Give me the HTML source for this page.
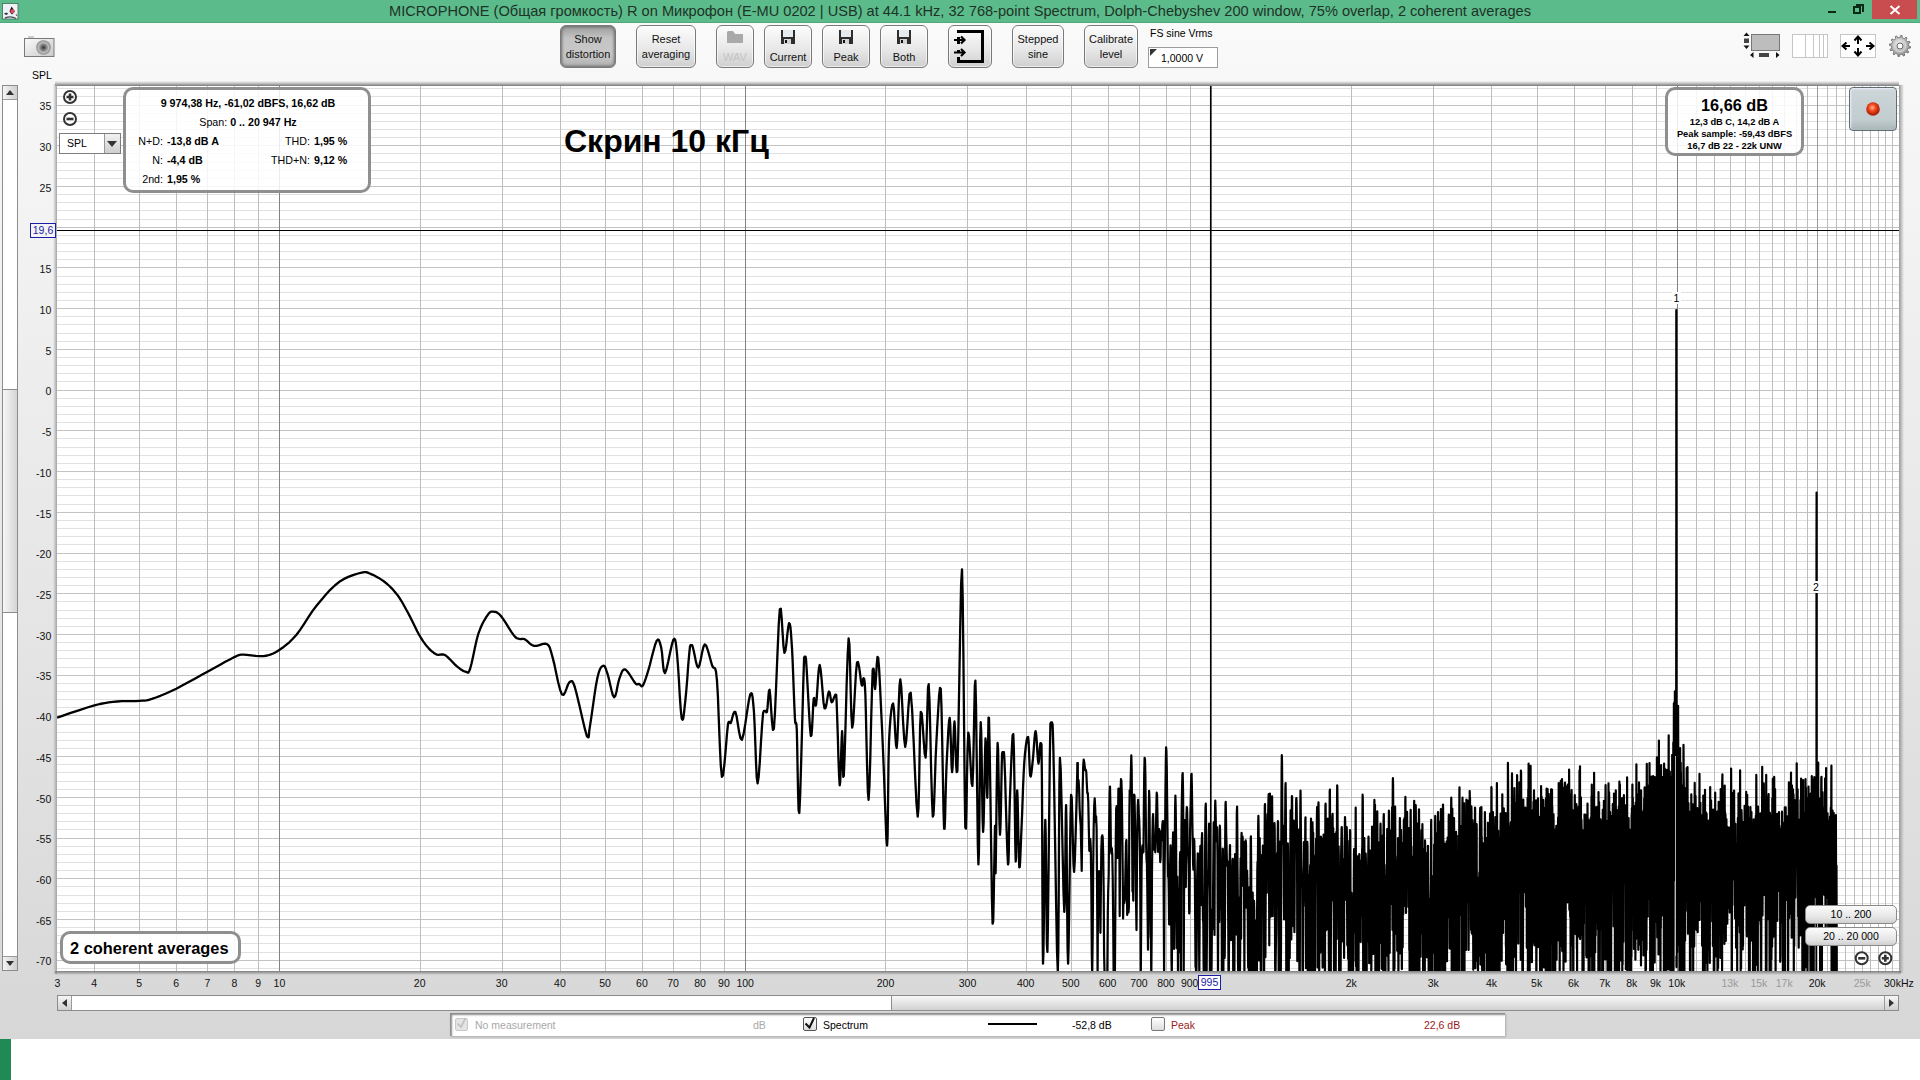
<!DOCTYPE html>
<html><head><meta charset="utf-8">
<style>
*{margin:0;padding:0;box-sizing:border-box}
html,body{width:1920px;height:1080px;overflow:hidden}
body{position:relative;font-family:"Liberation Sans",sans-serif;color:#000;
 background:linear-gradient(to bottom,#5cbb8a 0,#5cbb8a 22px,#4fa87a 22px,#4fa87a 23px,#fafafa 23px,#f7f7f7 90px,#d7d7d7 1039px,#fff 1039px)}
.a{position:absolute}
.plot{position:absolute;left:0;top:0}
.title{position:absolute;left:0;top:0;width:1920px;height:22px;text-align:center;font-size:14.6px;line-height:23px;color:#1d3327;white-space:nowrap}
.btn{position:absolute;top:25px;height:43px;border:1px solid #7a7a7a;border-radius:6px;
 background:linear-gradient(to bottom,#fdfdfd 0%,#e6e6e6 60%,#cfcfcf 100%);
 font-size:11px;line-height:15px;text-align:center;color:#111;box-shadow:inset 0 0 0 1px rgba(255,255,255,.6)}
.btn.pr{background:linear-gradient(to bottom,#9c9c9c 0%,#c4c4c4 30%,#c8c8c8 70%,#b0b0b0 100%);box-shadow:inset 0 0 3px 1px #6a6a6a}
.yl{position:absolute;width:40px;left:11.3px;text-align:right;font-size:10.5px;line-height:12px;color:#111}
.xl{position:absolute;top:977px;font-size:10.5px;line-height:12px;color:#111;text-align:center;width:40px;margin-left:-20px}
.xl.g{color:#9a9a9a}
.ib{position:absolute;border:3px solid #8f8f8f;border-radius:10px;background:rgba(255,255,255,.85)}
.ib b{font-weight:bold}
.row{position:absolute;font-size:10.5px;line-height:12px;white-space:nowrap}
</style></head><body>
<div class="a" style="left:55px;top:81px;width:1844px;height:5px;background:linear-gradient(to bottom,rgba(120,120,120,0),rgba(120,120,120,.35) 40%,#7a7a7a)"></div>
<div class="a" style="left:53px;top:84px;width:4px;height:890px;background:linear-gradient(to right,rgba(150,150,150,0),#a4a4a4)"></div>
<div class="a" style="left:1899px;top:85px;width:5px;height:888px;background:linear-gradient(to right,#999,rgba(150,150,150,0))"></div>
<div class="a" style="left:55px;top:971px;width:1846px;height:4px;background:linear-gradient(to bottom,#7d7d7d,rgba(150,150,150,0))"></div>
<svg class="plot" width="1920" height="1080" viewBox="0 0 1920 1080">
<defs><clipPath id="pc"><rect x="57" y="86" width="1842" height="885"/></clipPath></defs>
<rect x="57" y="86" width="1842" height="885" fill="#fff"/>
<g shape-rendering="crispEdges"><path d="M57 88.5H1899" stroke="#e1e1e1"/><path d="M57 96.5H1899" stroke="#e1e1e1"/><path d="M57 105.5H1899" stroke="#c3c3c3"/><path d="M57 113.5H1899" stroke="#e1e1e1"/><path d="M57 121.5H1899" stroke="#e1e1e1"/><path d="M57 129.5H1899" stroke="#e1e1e1"/><path d="M57 137.5H1899" stroke="#e1e1e1"/><path d="M57 145.5H1899" stroke="#c3c3c3"/><path d="M57 153.5H1899" stroke="#e1e1e1"/><path d="M57 162.5H1899" stroke="#e1e1e1"/><path d="M57 170.5H1899" stroke="#e1e1e1"/><path d="M57 178.5H1899" stroke="#e1e1e1"/><path d="M57 186.5H1899" stroke="#c3c3c3"/><path d="M57 194.5H1899" stroke="#e1e1e1"/><path d="M57 202.5H1899" stroke="#e1e1e1"/><path d="M57 210.5H1899" stroke="#e1e1e1"/><path d="M57 219.5H1899" stroke="#e1e1e1"/><path d="M57 227.5H1899" stroke="#c3c3c3"/><path d="M57 235.5H1899" stroke="#e1e1e1"/><path d="M57 243.5H1899" stroke="#e1e1e1"/><path d="M57 251.5H1899" stroke="#e1e1e1"/><path d="M57 259.5H1899" stroke="#e1e1e1"/><path d="M57 267.5H1899" stroke="#c3c3c3"/><path d="M57 276.5H1899" stroke="#e1e1e1"/><path d="M57 284.5H1899" stroke="#e1e1e1"/><path d="M57 292.5H1899" stroke="#e1e1e1"/><path d="M57 300.5H1899" stroke="#e1e1e1"/><path d="M57 308.5H1899" stroke="#c3c3c3"/><path d="M57 316.5H1899" stroke="#e1e1e1"/><path d="M57 324.5H1899" stroke="#e1e1e1"/><path d="M57 333.5H1899" stroke="#e1e1e1"/><path d="M57 341.5H1899" stroke="#e1e1e1"/><path d="M57 349.5H1899" stroke="#c3c3c3"/><path d="M57 357.5H1899" stroke="#e1e1e1"/><path d="M57 365.5H1899" stroke="#e1e1e1"/><path d="M57 373.5H1899" stroke="#e1e1e1"/><path d="M57 381.5H1899" stroke="#e1e1e1"/><path d="M57 390.5H1899" stroke="#c3c3c3"/><path d="M57 398.5H1899" stroke="#e1e1e1"/><path d="M57 406.5H1899" stroke="#e1e1e1"/><path d="M57 414.5H1899" stroke="#e1e1e1"/><path d="M57 422.5H1899" stroke="#e1e1e1"/><path d="M57 430.5H1899" stroke="#c3c3c3"/><path d="M57 438.5H1899" stroke="#e1e1e1"/><path d="M57 447.5H1899" stroke="#e1e1e1"/><path d="M57 455.5H1899" stroke="#e1e1e1"/><path d="M57 463.5H1899" stroke="#e1e1e1"/><path d="M57 471.5H1899" stroke="#c3c3c3"/><path d="M57 479.5H1899" stroke="#e1e1e1"/><path d="M57 487.5H1899" stroke="#e1e1e1"/><path d="M57 495.5H1899" stroke="#e1e1e1"/><path d="M57 504.5H1899" stroke="#e1e1e1"/><path d="M57 512.5H1899" stroke="#c3c3c3"/><path d="M57 520.5H1899" stroke="#e1e1e1"/><path d="M57 528.5H1899" stroke="#e1e1e1"/><path d="M57 536.5H1899" stroke="#e1e1e1"/><path d="M57 544.5H1899" stroke="#e1e1e1"/><path d="M57 553.5H1899" stroke="#c3c3c3"/><path d="M57 561.5H1899" stroke="#e1e1e1"/><path d="M57 569.5H1899" stroke="#e1e1e1"/><path d="M57 577.5H1899" stroke="#e1e1e1"/><path d="M57 585.5H1899" stroke="#e1e1e1"/><path d="M57 593.5H1899" stroke="#c3c3c3"/><path d="M57 601.5H1899" stroke="#e1e1e1"/><path d="M57 610.5H1899" stroke="#e1e1e1"/><path d="M57 618.5H1899" stroke="#e1e1e1"/><path d="M57 626.5H1899" stroke="#e1e1e1"/><path d="M57 634.5H1899" stroke="#c3c3c3"/><path d="M57 642.5H1899" stroke="#e1e1e1"/><path d="M57 650.5H1899" stroke="#e1e1e1"/><path d="M57 658.5H1899" stroke="#e1e1e1"/><path d="M57 667.5H1899" stroke="#e1e1e1"/><path d="M57 675.5H1899" stroke="#c3c3c3"/><path d="M57 683.5H1899" stroke="#e1e1e1"/><path d="M57 691.5H1899" stroke="#e1e1e1"/><path d="M57 699.5H1899" stroke="#e1e1e1"/><path d="M57 707.5H1899" stroke="#e1e1e1"/><path d="M57 715.5H1899" stroke="#c3c3c3"/><path d="M57 724.5H1899" stroke="#e1e1e1"/><path d="M57 732.5H1899" stroke="#e1e1e1"/><path d="M57 740.5H1899" stroke="#e1e1e1"/><path d="M57 748.5H1899" stroke="#e1e1e1"/><path d="M57 756.5H1899" stroke="#c3c3c3"/><path d="M57 764.5H1899" stroke="#e1e1e1"/><path d="M57 772.5H1899" stroke="#e1e1e1"/><path d="M57 781.5H1899" stroke="#e1e1e1"/><path d="M57 789.5H1899" stroke="#e1e1e1"/><path d="M57 797.5H1899" stroke="#c3c3c3"/><path d="M57 805.5H1899" stroke="#e1e1e1"/><path d="M57 813.5H1899" stroke="#e1e1e1"/><path d="M57 821.5H1899" stroke="#e1e1e1"/><path d="M57 829.5H1899" stroke="#e1e1e1"/><path d="M57 838.5H1899" stroke="#c3c3c3"/><path d="M57 846.5H1899" stroke="#e1e1e1"/><path d="M57 854.5H1899" stroke="#e1e1e1"/><path d="M57 862.5H1899" stroke="#e1e1e1"/><path d="M57 870.5H1899" stroke="#e1e1e1"/><path d="M57 878.5H1899" stroke="#c3c3c3"/><path d="M57 886.5H1899" stroke="#e1e1e1"/><path d="M57 895.5H1899" stroke="#e1e1e1"/><path d="M57 903.5H1899" stroke="#e1e1e1"/><path d="M57 911.5H1899" stroke="#e1e1e1"/><path d="M57 919.5H1899" stroke="#c3c3c3"/><path d="M57 927.5H1899" stroke="#e1e1e1"/><path d="M57 935.5H1899" stroke="#e1e1e1"/><path d="M57 943.5H1899" stroke="#e1e1e1"/><path d="M57 952.5H1899" stroke="#e1e1e1"/><path d="M57 960.5H1899" stroke="#c3c3c3"/><path d="M57 968.5H1899" stroke="#e1e1e1"/><path d="M94.5 86V971" stroke="#bebebe"/><path d="M139.5 86V971" stroke="#bebebe"/><path d="M176.5 86V971" stroke="#bebebe"/><path d="M207.5 86V971" stroke="#bebebe"/><path d="M234.5 86V971" stroke="#bebebe"/><path d="M258.5 86V971" stroke="#bebebe"/><path d="M279.5 86V971" stroke="#828282"/><path d="M420.5 86V971" stroke="#bebebe"/><path d="M502.5 86V971" stroke="#bebebe"/><path d="M560.5 86V971" stroke="#bebebe"/><path d="M605.5 86V971" stroke="#bebebe"/><path d="M642.5 86V971" stroke="#bebebe"/><path d="M673.5 86V971" stroke="#bebebe"/><path d="M700.5 86V971" stroke="#bebebe"/><path d="M724.5 86V971" stroke="#bebebe"/><path d="M745.5 86V971" stroke="#828282"/><path d="M885.5 86V971" stroke="#bebebe"/><path d="M967.5 86V971" stroke="#bebebe"/><path d="M1026.5 86V971" stroke="#bebebe"/><path d="M1071.5 86V971" stroke="#bebebe"/><path d="M1108.5 86V971" stroke="#bebebe"/><path d="M1139.5 86V971" stroke="#bebebe"/><path d="M1166.5 86V971" stroke="#bebebe"/><path d="M1190.5 86V971" stroke="#bebebe"/><path d="M1211.5 86V971" stroke="#828282"/><path d="M1351.5 86V971" stroke="#bebebe"/><path d="M1433.5 86V971" stroke="#bebebe"/><path d="M1491.5 86V971" stroke="#bebebe"/><path d="M1537.5 86V971" stroke="#bebebe"/><path d="M1574.5 86V971" stroke="#bebebe"/><path d="M1605.5 86V971" stroke="#bebebe"/><path d="M1632.5 86V971" stroke="#bebebe"/><path d="M1656.5 86V971" stroke="#bebebe"/><path d="M1677.5 86V971" stroke="#828282"/><path d="M1696.5 86V971" stroke="#bebebe"/><path d="M1714.5 86V971" stroke="#bebebe"/><path d="M1730.5 86V971" stroke="#bebebe"/><path d="M1745.5 86V971" stroke="#bebebe"/><path d="M1759.5 86V971" stroke="#bebebe"/><path d="M1772.5 86V971" stroke="#bebebe"/><path d="M1784.5 86V971" stroke="#bebebe"/><path d="M1796.5 86V971" stroke="#bebebe"/><path d="M1807.5 86V971" stroke="#bebebe"/><path d="M1817.5 86V971" stroke="#9c9c9c"/><path d="M1827.5 86V971" stroke="#bebebe"/><path d="M1836.5 86V971" stroke="#bebebe"/><path d="M1845.5 86V971" stroke="#bebebe"/><path d="M1854.5 86V971" stroke="#bebebe"/><path d="M1862.5 86V971" stroke="#bebebe"/><path d="M1870.5 86V971" stroke="#bebebe"/><path d="M1878.5 86V971" stroke="#bebebe"/><path d="M1885.5 86V971" stroke="#bebebe"/><path d="M1892.5 86V971" stroke="#bebebe"/></g>
<g clip-path="url(#pc)">
<path d="M57.1 717.6 L62.4 715.8 L70.0 713.2 L78.7 710.3 L87.3 707.5 L94.4 705.4 L99.9 704.0 L104.6 703.1 L108.8 702.4 L112.9 701.9 L117.2 701.5 L121.9 701.2 L126.7 701.1 L131.4 701.1 L135.8 701.1 L139.6 700.9 L142.5 700.7 L144.7 700.6 L146.6 700.4 L148.8 699.8 L151.9 698.9 L155.9 697.5 L160.4 695.8 L165.4 693.7 L170.8 691.3 L176.3 688.7 L182.2 685.6 L188.7 682.1 L195.3 678.4 L201.8 674.8 L207.9 671.4 L213.8 668.2 L219.7 664.9 L225.3 661.8 L230.3 659.2 L234.4 657.1 L237.2 655.8 L238.8 655.1 L239.9 654.8 L241.2 654.7 L243.5 654.7 L246.9 654.9 L251.1 655.3 L255.6 655.9 L260.0 656.2 L263.9 656.1 L267.3 655.5 L270.3 654.6 L273.2 653.5 L276.1 651.9 L279.2 650.0 L282.5 647.8 L285.8 645.2 L289.3 642.3 L292.8 638.8 L296.5 634.7 L300.3 629.6 L304.3 623.6 L308.4 617.2 L312.6 610.9 L316.9 605.2 L321.3 599.9 L325.7 594.7 L330.2 589.8 L334.8 585.5 L339.3 581.8 L344.0 578.9 L348.9 576.6 L353.7 574.8 L358.1 573.5 L361.7 572.6 L364.4 572.1 L366.2 572.1 L367.7 572.6 L369.2 573.3 L371.1 574.1 L373.5 575.1 L376.0 576.4 L378.7 577.9 L381.4 579.6 L384.1 581.5 L386.7 583.6 L389.4 586.0 L392.0 588.6 L394.5 591.4 L397.0 594.4 L399.3 597.7 L401.6 601.3 L403.7 605.0 L405.9 609.0 L408.1 613.0 L410.4 617.4 L412.7 622.1 L415.0 626.8 L417.2 631.3 L419.3 635.2 L421.3 638.5 L423.2 641.3 L425.0 643.8 L426.7 646.1 L428.5 648.1 L430.2 649.9 L431.9 651.4 L433.6 652.7 L435.2 653.8 L436.9 654.6 L438.5 654.9 L440.0 654.7 L441.6 654.5 L443.3 654.5 L445.2 655.2 L447.4 656.9 L449.9 659.3 L452.5 662.0 L455.0 664.6 L457.2 666.7 L459.2 668.2 L461.0 669.6 L462.7 670.6 L464.2 671.3 L465.6 671.7 L466.7 672.1 L467.5 672.5 L468.3 672.5 L469.1 671.3 L470.2 668.5 L471.6 663.2 L473.2 655.9 L474.9 647.7 L476.7 639.8 L478.5 633.3 L480.4 628.3 L482.3 624.0 L484.3 620.3 L486.2 617.2 L487.8 614.8 L489.1 613.1 L490.2 612.1 L491.1 611.7 L492.1 611.6 L493.3 611.7 L494.6 611.8 L495.9 612.0 L497.2 612.6 L498.8 613.8 L500.7 615.7 L503.1 618.9 L505.9 623.1 L508.8 627.8 L511.5 632.1 L513.7 635.2 L515.3 637.0 L516.5 638.0 L517.4 638.4 L518.3 638.6 L519.3 638.9 L520.3 639.1 L521.3 639.0 L522.3 638.9 L523.5 638.9 L524.8 639.3 L526.4 640.4 L528.1 641.9 L529.9 643.6 L531.9 645.0 L534.1 645.9 L536.6 645.8 L539.4 645.1 L542.2 644.1 L544.8 643.6 L547.0 644.1 L548.5 645.4 L549.6 647.2 L550.4 649.6 L551.4 653.0 L552.6 657.4 L554.3 664.1 L556.1 672.8 L558.1 682.0 L560.1 689.8 L561.9 694.4 L563.5 694.9 L565.1 692.3 L566.6 688.4 L568.0 684.5 L569.3 682.4 L570.4 681.5 L571.3 681.2 L572.2 681.2 L573.3 683.0 L574.8 687.0 L576.9 694.9 L579.6 706.3 L582.4 718.6 L585.0 729.4 L586.9 736.1 L588.0 737.3 L588.6 737.3 L588.9 735.6 L589.2 731.3 L590.0 725.9 L591.2 718.1 L592.7 707.7 L594.3 696.3 L595.9 685.7 L597.4 677.8 L598.7 672.7 L599.9 669.4 L601.1 667.3 L602.2 666.2 L603.3 665.7 L604.2 665.8 L605.0 666.9 L605.8 668.7 L606.6 671.2 L607.6 674.1 L608.8 678.5 L610.1 684.3 L611.5 690.3 L612.8 695.1 L614.1 697.2 L615.3 695.9 L616.4 692.0 L617.4 686.8 L618.5 681.7 L619.6 677.8 L620.6 675.1 L621.6 672.6 L622.6 670.6 L623.8 669.5 L625.2 669.4 L627.0 671.0 L629.3 674.0 L631.6 677.6 L633.7 681.0 L635.4 683.3 L636.6 684.3 L637.3 684.4 L637.9 684.2 L638.5 683.9 L639.1 683.9 L639.8 684.4 L640.5 685.3 L641.2 686.1 L641.9 686.3 L642.8 685.6 L643.7 683.9 L644.7 681.4 L645.8 678.3 L647.0 674.6 L648.3 670.4 L649.9 664.8 L651.6 657.8 L653.5 650.6 L655.2 644.5 L656.7 640.7 L657.9 639.5 L658.9 640.1 L659.7 642.1 L660.5 644.9 L661.3 648.1 L662.0 652.9 L662.6 659.6 L663.2 666.5 L664.0 671.5 L665.0 673.1 L666.4 669.4 L668.2 661.7 L670.1 652.5 L671.9 644.4 L673.3 639.8 L674.3 638.7 L675.1 639.5 L675.7 642.2 L676.3 646.9 L677.0 653.7 L677.9 664.7 L678.9 680.0 L679.8 696.1 L680.8 710.1 L681.7 718.5 L682.5 719.7 L683.2 718.8 L683.9 713.9 L684.6 707.3 L685.4 700.0 L686.3 690.6 L687.3 678.4 L688.2 665.5 L689.2 654.1 L690.0 646.3 L690.6 645.1 L691.1 645.1 L691.6 645.1 L692.1 645.1 L692.8 647.2 L693.7 650.7 L694.8 656.0 L695.9 661.6 L697.1 666.0 L698.3 667.6 L699.5 665.0 L700.8 659.3 L702.1 652.6 L703.4 646.9 L704.8 644.4 L706.3 645.9 L707.8 650.1 L709.4 655.6 L710.9 661.2 L712.2 665.7 L713.3 667.6 L714.3 667.8 L715.1 668.4 L716.0 671.6 L716.9 679.6 L717.9 696.1 L718.8 719.7 L719.8 744.8 L720.8 765.7 L721.9 776.9 L723.1 775.1 L724.4 764.1 L725.8 748.7 L727.0 733.7 L728.0 724.1 L728.7 721.9 L729.2 721.9 L729.6 721.9 L730.1 723.1 L730.7 723.1 L731.5 720.9 L732.3 717.5 L733.3 714.1 L734.3 711.9 L735.4 712.0 L736.6 716.2 L737.8 723.8 L739.1 732.1 L740.5 738.3 L741.9 739.8 L743.5 734.4 L745.3 723.9 L747.1 711.6 L748.8 700.7 L750.2 694.4 L751.2 693.2 L752.0 693.9 L752.6 697.4 L753.2 703.2 L753.9 711.1 L754.6 724.3 L755.3 742.8 L756.0 762.0 L756.7 777.1 L757.6 783.3 L758.6 777.3 L759.8 762.1 L760.9 743.0 L762.1 724.9 L763.1 713.0 L764.0 710.8 L764.8 710.8 L765.5 710.8 L766.2 712.4 L766.9 712.0 L767.5 707.9 L768.0 701.7 L768.5 695.3 L769.0 690.7 L769.6 689.8 L770.3 696.2 L771.1 708.6 L772.0 721.6 L772.9 729.9 L773.9 728.7 L775.0 712.3 L776.2 684.5 L777.5 652.9 L778.7 625.3 L779.8 609.3 L780.8 608.7 L781.7 618.5 L782.6 632.9 L783.5 646.2 L784.4 652.8 L785.4 650.7 L786.4 643.6 L787.3 634.6 L788.3 626.7 L789.1 623.1 L789.8 623.9 L790.4 627.0 L790.9 632.2 L791.4 639.4 L792.0 648.1 L792.6 660.1 L793.2 675.6 L793.8 692.0 L794.4 706.9 L794.9 717.9 L795.3 722.9 L795.7 723.5 L796.0 722.8 L796.4 724.0 L796.8 730.0 L797.2 745.9 L797.6 769.5 L798.1 793.5 L798.6 810.5 L799.3 813.0 L800.2 794.7 L801.2 760.6 L802.3 720.1 L803.3 682.6 L804.1 657.8 L804.6 656.6 L804.9 656.6 L805.2 656.6 L805.5 656.6 L806.0 659.0 L806.8 671.4 L807.8 689.8 L808.9 709.8 L809.9 726.7 L810.8 736.0 L811.5 735.2 L812.1 727.2 L812.7 716.0 L813.2 705.2 L813.7 698.7 L814.2 697.9 L814.6 700.2 L815.1 703.5 L815.6 705.7 L816.1 704.7 L816.7 698.4 L817.4 688.1 L818.1 677.1 L818.9 668.4 L819.7 665.0 L820.6 669.3 L821.6 679.2 L822.6 691.3 L823.5 702.2 L824.5 708.3 L825.4 708.3 L826.4 704.6 L827.3 699.1 L828.1 694.1 L828.9 691.5 L829.6 692.2 L830.1 694.7 L830.6 697.9 L831.1 700.8 L831.7 702.3 L832.3 701.9 L833.0 700.4 L833.7 698.4 L834.3 696.6 L834.9 695.8 L835.3 694.8 L835.6 694.6 L835.9 694.6 L836.2 694.8 L836.6 701.1 L837.1 715.1 L837.8 735.7 L838.4 757.8 L839.1 776.0 L839.7 785.3 L840.2 781.8 L840.7 768.9 L841.2 752.4 L841.7 737.9 L842.1 731.2 L842.4 736.7 L842.7 750.6 L842.9 766.2 L843.3 776.9 L843.8 775.7 L844.6 756.3 L845.6 723.0 L846.6 685.8 L847.7 654.4 L848.6 638.5 L849.4 644.3 L850.1 665.2 L850.7 692.2 L851.4 716.0 L852.2 727.6 L853.1 723.1 L854.0 708.5 L855.0 689.7 L856.0 672.4 L857.0 662.6 L858.0 662.0 L859.1 666.8 L860.1 674.2 L861.0 681.4 L861.8 685.4 L862.3 685.5 L862.7 683.5 L863.0 680.8 L863.2 678.6 L863.5 678.2 L863.8 678.6 L864.2 679.0 L864.5 680.9 L864.9 685.7 L865.4 695.1 L865.9 714.2 L866.5 741.9 L867.2 770.6 L867.9 792.5 L868.6 799.8 L869.4 786.4 L870.3 757.5 L871.1 722.3 L872.0 690.0 L872.7 669.8 L873.3 668.6 L873.7 669.2 L874.2 677.8 L874.6 686.0 L875.1 689.0 L875.6 684.0 L876.2 674.2 L876.8 663.8 L877.5 656.9 L878.2 657.8 L879.1 668.4 L880.0 685.8 L881.0 707.2 L882.1 729.7 L883.0 750.4 L883.9 772.4 L884.8 797.8 L885.7 821.6 L886.4 839.2 L887.1 845.5 L887.6 836.5 L887.9 815.3 L888.2 788.3 L888.5 761.7 L889.0 742.0 L889.7 728.8 L890.5 717.9 L891.4 709.8 L892.3 704.8 L893.1 703.5 L893.9 708.9 L894.6 720.8 L895.3 734.4 L896.0 745.0 L896.7 748.0 L897.4 739.3 L898.1 722.2 L898.8 702.5 L899.5 686.2 L900.3 679.4 L901.2 686.1 L902.1 702.4 L903.1 722.1 L904.2 738.9 L905.2 746.8 L906.2 740.9 L907.3 725.4 L908.4 707.4 L909.5 694.1 L910.7 692.7 L912.1 709.7 L913.6 740.4 L915.1 775.0 L916.5 803.6 L917.7 816.6 L918.5 807.9 L919.1 784.0 L919.6 753.9 L920.1 726.9 L920.8 711.9 L921.7 713.3 L922.7 725.1 L923.7 740.7 L924.7 753.7 L925.6 757.6 L926.3 747.2 L926.9 726.9 L927.5 704.5 L928.0 687.6 L928.7 684.2 L929.5 700.8 L930.3 732.3 L931.1 768.7 L932.0 800.1 L932.8 816.6 L933.5 814.6 L934.2 800.6 L934.9 780.2 L935.6 758.8 L936.4 742.0 L937.2 726.9 L938.2 710.0 L939.1 695.3 L940.0 687.8 L940.8 689.0 L941.5 707.8 L942.2 740.7 L942.9 778.1 L943.5 810.5 L944.1 828.6 L944.6 828.8 L945.1 817.5 L945.5 799.8 L946.0 780.9 L946.5 766.1 L947.1 753.9 L947.8 740.9 L948.4 729.1 L949.1 720.8 L949.7 717.9 L950.2 723.9 L950.7 737.2 L951.2 753.1 L951.6 766.3 L952.1 772.1 L952.6 767.1 L953.0 754.6 L953.5 739.6 L954.0 726.9 L954.5 721.5 L955.0 729.0 L955.5 746.1 L956.1 764.4 L956.7 772.1 L957.4 770.9 L958.2 739.3 L959.2 686.3 L960.2 629.0 L961.1 584.3 L962.0 569.4 L962.7 597.2 L963.4 656.5 L964.1 727.5 L964.7 791.0 L965.3 827.4 L965.9 828.6 L966.5 807.8 L967.0 776.8 L967.6 747.7 L968.3 732.6 L969.1 736.3 L969.9 750.9 L970.8 768.9 L971.6 783.0 L972.4 785.9 L973.1 770.4 L973.7 741.4 L974.3 709.6 L974.8 685.8 L975.4 680.7 L976.0 704.2 L976.6 749.0 L977.3 800.5 L977.8 843.9 L978.4 864.4 L978.9 852.8 L979.4 818.9 L979.8 776.6 L980.2 739.7 L980.7 722.2 L981.2 731.3 L981.7 757.7 L982.1 790.6 L982.6 818.9 L983.1 831.9 L983.6 823.8 L984.1 801.8 L984.6 774.6 L985.1 750.7 L985.5 738.5 L985.9 742.8 L986.3 757.9 L986.6 776.8 L987.0 792.4 L987.3 797.8 L987.6 786.1 L987.9 762.1 L988.2 735.9 L988.5 717.7 L989.0 717.8 L989.6 745.5 L990.4 794.1 L991.2 849.5 L991.9 897.4 L992.6 923.7 L993.2 921.3 L993.7 899.5 L994.2 869.2 L994.7 841.1 L995.0 826.0 L995.2 829.0 L995.3 843.0 L995.3 860.2 L995.4 872.9 L995.6 873.3 L995.9 855.1 L996.3 823.3 L996.7 787.7 L997.2 757.7 L997.6 743.0 L998.1 749.9 L998.5 772.0 L999.0 799.9 L999.5 824.0 L1000.0 834.8 L1000.4 828.2 L1000.9 810.5 L1001.3 787.9 L1001.7 766.8 L1002.1 753.3 L1002.5 752.1 L1002.9 752.1 L1003.4 752.1 L1003.9 752.1 L1004.4 759.3 L1005.1 776.7 L1005.8 802.2 L1006.6 829.6 L1007.4 852.5 L1008.0 864.4 L1008.4 862.8 L1008.8 851.8 L1009.0 835.5 L1009.4 817.7 L1009.8 802.2 L1010.4 785.8 L1011.1 766.0 L1011.9 747.5 L1012.6 735.3 L1013.3 734.1 L1013.9 750.2 L1014.4 780.5 L1014.9 815.4 L1015.3 845.6 L1015.7 861.5 L1016.0 857.6 L1016.3 840.2 L1016.6 817.7 L1016.9 798.3 L1017.2 790.4 L1017.6 798.2 L1018.0 816.2 L1018.4 838.0 L1018.9 857.2 L1019.3 867.4 L1019.7 867.1 L1020.2 860.4 L1020.6 849.9 L1021.1 837.6 L1021.6 826.0 L1022.1 814.1 L1022.6 800.2 L1023.1 786.0 L1023.7 772.8 L1024.3 762.2 L1025.0 753.7 L1025.8 746.3 L1026.6 740.6 L1027.4 737.3 L1028.1 737.0 L1028.6 741.5 L1029.0 750.3 L1029.4 760.8 L1029.8 770.2 L1030.2 775.6 L1030.7 776.5 L1031.1 774.8 L1031.6 771.3 L1032.1 766.8 L1032.6 762.2 L1033.2 756.1 L1033.8 748.0 L1034.4 739.8 L1035.0 733.5 L1035.6 731.1 L1036.2 734.4 L1036.8 742.0 L1037.3 751.3 L1037.9 759.5 L1038.5 763.7 L1039.1 759.3 L1039.8 748.3 L1040.4 743.2 L1041.0 743.2 L1041.5 744.4 L1041.9 778.8 L1042.2 832.4 L1042.4 890.7 L1042.7 939.3 L1043.0 963.7 L1043.4 953.8 L1043.9 919.1 L1044.4 875.1 L1044.8 836.9 L1045.3 820.0 L1045.7 834.5 L1046.1 870.2 L1046.5 911.8 L1046.9 944.2 L1047.4 951.9 L1047.9 925.3 L1048.5 874.5 L1049.2 814.2 L1049.8 759.1 L1050.4 723.7 L1051.0 722.5 L1051.5 722.5 L1052.0 722.5 L1052.6 724.5 L1053.3 745.9 L1054.1 784.9 L1055.1 842.4 L1056.1 902.8 L1057.0 950.8 L1057.8 971.0 L1058.3 950.5 L1058.7 899.6 L1059.0 837.7 L1059.4 783.9 L1059.9 757.8 L1060.7 769.3 L1061.6 805.5 L1062.6 851.4 L1063.5 891.9 L1064.3 911.9 L1064.8 903.0 L1065.2 875.3 L1065.5 841.3 L1065.8 813.7 L1066.1 805.2 L1066.5 825.2 L1066.8 865.2 L1067.2 911.1 L1067.6 948.7 L1068.1 963.7 L1068.6 946.9 L1069.2 907.9 L1069.9 860.4 L1070.5 818.1 L1071.1 794.8 L1071.7 797.5 L1072.3 816.9 L1072.9 842.7 L1073.5 864.5 L1074.1 871.9 L1074.8 860.2 L1075.6 836.2 L1076.4 807.1 L1077.1 780.1 L1077.6 762.2" fill="none" stroke="#000" stroke-width="2.3" stroke-linejoin="round"/>
<path d="M1077.6 762.2 L1078.0 787.1 L1078.6 780.2 L1079.1 789.4 L1079.6 807.7 L1080.1 818.0 L1080.7 825.7 L1081.2 848.4 L1081.7 871.0 L1082.2 832.1 L1082.7 787.8 L1083.2 765.8 L1083.7 759.7 L1084.2 761.9 L1084.8 767.1 L1085.3 770.2 L1085.8 769.7 L1086.3 772.1 L1086.8 783.7 L1087.3 793.3 L1087.8 793.0 L1088.3 802.7 L1088.8 828.5 L1089.3 850.8 L1089.8 848.3 L1090.3 839.1 L1090.8 848.8 L1091.3 886.3 L1091.8 954.3 L1092.2 976.0 L1092.7 936.0 L1093.2 864.9 L1093.7 826.3 L1094.2 805.5 L1094.7 798.4 L1095.2 808.4 L1095.6 822.0 L1096.1 816.4 L1096.6 828.1 L1097.1 893.1 L1097.6 976.0 L1098.0 902.7 L1098.5 873.8 L1099.0 871.0 L1099.5 873.8 L1099.9 898.3 L1100.4 932.8 L1100.9 888.8 L1101.3 849.7 L1101.8 836.9 L1102.3 835.3 L1102.7 837.4 L1103.2 854.5 L1103.7 894.0 L1104.1 954.1 L1104.6 976.0 L1105.1 976.0 L1105.5 976.0 L1106.0 976.0 L1106.4 976.0 L1106.9 976.0 L1107.3 976.0 L1107.8 913.0 L1108.2 890.7 L1108.7 875.0 L1109.1 827.8 L1109.6 793.5 L1110.0 786.5 L1110.5 809.1 L1110.9 849.0 L1111.4 853.4 L1111.8 848.1 L1112.3 855.1 L1112.7 876.2 L1113.2 921.7 L1113.6 973.1 L1114.0 976.0 L1114.5 976.0 L1114.9 976.0 L1115.4 900.4 L1115.8 837.6 L1116.2 808.8 L1116.7 806.0 L1117.1 826.7 L1117.5 858.0 L1118.0 823.3 L1118.4 788.7 L1118.8 788.6 L1119.3 825.0 L1119.7 916.1 L1120.1 850.4 L1120.5 794.2 L1121.0 779.2 L1121.4 780.7 L1121.8 793.5 L1122.2 822.7 L1122.7 870.5 L1123.1 918.6 L1123.5 897.7 L1123.9 887.1 L1124.3 903.1 L1124.8 900.0 L1125.2 883.2 L1125.6 862.7 L1126.0 842.7 L1126.4 840.0 L1126.8 864.1 L1127.2 915.0 L1127.7 897.3 L1128.1 871.1 L1128.5 912.3 L1128.9 907.2 L1129.3 818.2 L1129.7 790.3 L1130.1 790.5 L1130.5 789.3 L1130.9 770.8 L1131.3 755.3 L1131.7 769.3 L1132.1 831.1 L1132.5 891.5 L1132.9 882.5 L1133.3 900.7 L1133.7 829.5 L1134.1 794.6 L1134.5 795.4 L1134.9 815.9 L1135.3 840.0 L1135.7 864.2 L1136.1 905.1 L1136.5 930.1 L1136.9 876.6 L1137.3 832.6 L1137.7 807.2 L1138.1 799.8 L1138.5 806.1 L1138.8 813.9 L1139.2 818.9 L1139.6 831.9 L1140.0 853.4 L1140.4 899.7 L1140.8 976.0 L1141.2 921.6 L1141.6 866.9 L1141.9 851.5 L1142.3 846.5 L1142.7 845.0 L1143.1 852.4 L1143.5 852.0 L1143.8 812.6 L1144.2 774.5 L1144.6 757.8 L1145.0 759.2 L1145.4 775.8 L1145.7 807.1 L1146.1 842.9 L1146.5 859.3 L1146.9 863.5 L1147.2 882.0 L1147.6 915.1 L1148.0 949.7 L1148.3 901.8 L1148.7 820.9 L1149.1 790.9 L1149.5 800.4 L1149.8 843.0 L1150.2 903.6 L1150.6 936.2 L1150.9 939.3 L1151.3 975.1 L1151.7 932.3 L1152.0 870.3 L1152.4 836.8 L1152.8 818.0 L1153.1 814.0 L1153.5 829.1 L1153.8 849.7 L1154.2 845.1 L1154.6 835.6 L1154.9 841.2 L1155.3 852.3 L1155.6 844.9 L1156.0 826.1 L1156.4 805.5 L1156.7 792.7 L1157.1 795.4 L1157.4 813.1 L1157.8 837.4 L1158.1 852.0 L1158.5 848.0 L1158.8 835.4 L1159.2 829.0 L1159.5 833.3 L1159.9 846.0 L1160.2 862.1 L1160.6 859.0 L1160.9 837.4 L1161.3 831.3 L1161.6 840.1 L1162.0 836.0 L1162.3 825.1 L1162.7 821.6 L1163.0 821.0 L1163.4 837.2 L1163.7 900.3 L1164.1 976.0 L1164.4 896.7 L1164.7 862.6 L1165.1 832.4 L1165.4 793.6 L1165.8 762.0 L1166.1 747.3 L1166.4 750.6 L1166.8 768.7 L1167.1 797.1 L1167.5 828.2 L1167.8 857.8 L1168.1 876.9 L1168.5 875.8 L1168.8 893.4 L1169.1 924.3 L1169.5 924.5 L1169.8 900.4 L1170.1 866.4 L1170.5 845.4 L1170.8 854.7 L1171.1 893.2 L1171.5 961.1 L1171.8 976.0 L1172.1 926.8 L1172.5 876.2 L1172.8 847.1 L1173.1 832.4 L1173.4 842.2 L1173.8 885.4 L1174.1 949.0 L1174.4 905.9 L1174.8 844.9 L1175.1 808.1 L1175.4 795.7 L1175.7 806.0 L1176.1 839.5 L1176.4 906.3 L1176.7 948.1 L1177.0 886.5 L1177.3 876.6 L1177.7 914.4 L1178.0 976.0 L1178.3 921.6 L1178.6 889.7 L1178.9 907.6 L1179.3 952.2 L1179.6 907.7 L1179.9 860.2 L1180.2 852.2 L1180.5 896.4 L1180.9 976.0 L1181.2 881.1 L1181.5 826.7 L1181.8 801.9 L1182.1 786.8 L1182.4 774.8 L1182.7 773.0 L1183.1 792.8 L1183.4 850.9 L1183.7 976.0 L1184.0 904.2 L1184.3 859.7 L1184.6 834.1 L1184.9 820.1 L1185.2 829.8 L1185.5 867.9 L1185.8 887.1 L1186.2 841.7 L1186.5 815.1 L1186.8 807.0 L1187.1 808.9 L1187.4 823.0 L1187.7 846.7 L1188.0 856.0 L1188.3 855.6 L1188.6 864.3 L1188.9 883.9 L1189.2 913.5 L1189.5 911.2 L1189.8 863.3 L1190.1 829.4 L1190.4 813.3 L1190.7 802.2 L1191.0 786.7 L1191.3 774.3 L1191.6 773.8 L1191.9 787.1 L1192.2 810.0 L1192.5 830.9 L1192.8 845.4 L1193.1 864.5 L1193.4 869.7 L1193.7 851.0 L1194.0 838.9 L1194.3 840.7 L1194.6 854.3 L1194.9 880.3 L1195.2 924.3 L1195.5 967.1 L1195.8 955.1 L1196.1 976.0 L1196.4 976.0 L1196.7 944.5 L1196.9 893.7 L1197.2 875.6 L1197.5 863.1 L1197.8 853.3 L1198.1 854.3 L1198.4 866.9 L1198.7 887.4 L1199.0 930.5 L1199.3 976.0 L1199.6 929.2 L1199.8 875.4 L1200.1 854.4 L1200.4 845.8 L1200.7 853.6 L1201.0 894.7 L1201.3 904.9 L1201.6 859.5 L1201.8 839.7 L1202.1 833.0 L1202.4 852.9 L1202.7 900.8 L1203.0 919.9 L1203.3 922.6 L1203.6 963.3 L1203.8 976.0 L1204.1 976.0 L1204.4 976.0 L1204.7 935.1 L1205.0 876.8 L1205.2 834.1 L1205.5 807.6 L1205.8 803.7 L1206.1 827.7 L1206.4 889.7 L1206.6 976.0 L1206.9 938.7 L1207.2 896.6 L1207.5 880.6 L1207.7 872.9 L1208.0 873.7 L1208.3 882.1 L1208.6 868.3 L1208.8 837.7 L1209.1 823.7 L1209.4 838.5 L1209.7 894.2 L1209.9 976.0 L1210.2 976.0 L1210.5 976.0 L1210.8 976.0 L1211.0 973.4 L1211.3 976.0 L1211.6 965.6 L1211.9 926.1 L1212.1 909.3 L1212.4 919.4 L1212.7 928.9 L1212.9 912.8 L1213.2 878.6 L1213.5 841.5 L1213.7 822.4 L1214.0 831.4 L1214.3 891.0 L1214.5 934.9 L1214.8 837.6 L1215.1 805.7 L1215.3 800.7 L1215.6 810.2 L1215.9 826.7 L1216.1 837.9 L1216.4 841.2 L1216.7 837.4 L1216.9 827.1 L1217.2 829.7 L1217.5 856.4 L1217.7 916.3 L1218.0 976.0 L1218.3 905.4 L1218.5 870.3 L1218.8 876.9 L1219.0 918.8 L1219.3 921.9 L1219.6 855.1 L1219.8 825.7 L1220.1 831.0 L1220.4 864.9 L1220.6 908.9 L1220.9 902.8 L1221.1 869.8 L1221.4 860.6 L1221.6 896.0 L1221.9 976.0 L1222.2 937.4 L1222.4 872.4 L1222.7 848.6 L1222.9 849.3 L1223.2 899.9 L1223.4 976.0 L1223.7 875.8 L1224.0 861.0 L1224.2 901.7 L1224.5 953.7 L1224.7 957.9 L1225.0 921.8 L1225.2 838.2 L1225.5 804.0 L1225.7 801.8 L1226.0 817.0 L1226.2 833.6 L1226.5 843.2 L1226.7 853.4 L1227.0 865.3 L1227.3 865.9 L1227.5 861.3 L1227.8 868.3 L1228.0 893.9 L1228.3 934.0 L1228.5 976.0 L1228.8 976.0 L1229.0 948.4 L1229.3 906.8 L1229.5 874.5 L1229.8 850.3 L1230.0 845.1 L1230.2 865.8 L1230.5 893.4 L1230.7 907.1 L1231.0 940.2 L1231.2 919.9 L1231.5 901.5 L1231.7 910.7 L1232.0 906.2 L1232.2 882.8 L1232.5 860.8 L1232.7 858.8 L1233.0 893.3 L1233.2 976.0 L1233.4 976.0 L1233.7 970.5 L1233.9 976.0 L1234.2 976.0 L1234.4 976.0 L1234.7 904.4 L1234.9 860.7 L1235.1 854.2 L1235.4 871.5 L1235.6 903.2 L1235.9 931.7 L1236.1 934.4 L1236.3 904.4 L1236.6 850.2 L1236.8 813.2 L1237.1 806.6 L1237.3 828.6 L1237.5 863.1 L1237.8 896.3 L1238.0 961.7 L1238.3 976.0 L1238.5 925.7 L1238.7 897.3 L1239.0 939.4 L1239.2 969.4 L1239.4 926.8 L1239.7 961.6 L1239.9 976.0 L1240.2 951.2 L1240.4 878.1 L1240.6 858.3 L1240.9 909.3 L1241.1 938.7 L1241.3 843.0 L1241.6 832.9 L1241.8 865.2 L1242.0 864.5 L1242.3 841.1 L1242.5 836.4 L1242.7 839.3 L1243.0 852.1 L1243.2 886.1 L1243.4 880.9 L1243.7 841.8 L1243.9 845.5 L1244.1 907.0 L1244.4 973.2 L1244.6 879.4 L1244.8 846.3 L1245.0 844.0 L1245.3 850.2 L1245.5 847.4 L1245.7 840.3 L1246.0 844.2 L1246.2 871.0 L1246.4 907.6 L1246.6 902.3 L1246.9 880.0 L1247.1 870.6 L1247.3 877.9 L1247.6 897.4 L1247.8 921.3 L1248.0 952.1 L1248.2 967.7 L1248.5 949.7 L1248.7 962.8 L1248.9 976.0 L1249.1 943.4 L1249.4 888.8 L1249.6 887.0 L1249.8 911.8 L1250.0 951.3 L1250.3 976.0 L1250.5 893.8 L1250.7 839.6 L1250.9 836.4 L1251.2 868.8 L1251.4 943.7 L1251.6 976.0 L1251.8 967.3 L1252.1 976.0 L1252.3 976.0 L1252.5 920.1 L1252.7 892.6 L1252.9 925.7 L1253.2 976.0 L1253.4 976.0 L1253.6 976.0 L1253.8 953.0 L1254.0 900.8 L1254.3 910.8 L1254.5 976.0 L1254.7 976.0 L1254.9 942.7 L1255.1 944.2 L1255.4 955.4 L1255.6 936.6 L1255.8 921.8 L1256.0 920.7 L1256.2 930.1 L1256.5 952.3 L1256.7 976.0 L1256.9 976.0 L1257.1 913.2 L1257.3 870.7 L1257.5 861.9 L1257.8 868.8 L1258.0 848.4 L1258.2 823.1 L1258.4 815.8 L1258.6 828.4 L1258.8 868.9 L1259.0 960.5 L1259.3 898.6 L1259.5 844.6 L1259.7 838.0 L1259.9 859.5 L1260.1 878.3 L1260.3 886.7 L1260.5 921.0 L1260.8 976.0 L1261.0 976.0 L1261.2 976.0 L1261.4 976.0 L1261.6 943.9 L1261.8 886.7 L1262.0 854.9 L1262.2 859.4 L1262.5 881.7 L1262.7 860.9 L1262.9 845.7 L1263.1 854.8 L1263.3 864.2 L1263.5 864.3 L1263.7 872.4 L1263.9 904.6 L1264.1 976.0 L1264.3 933.5 L1264.6 842.5 L1264.8 805.9 L1265.0 804.0 L1265.2 841.0 L1265.4 957.2 L1265.6 916.0 L1265.8 850.0 L1266.0 829.1 L1266.2 826.1 L1266.4 833.9 L1266.6 856.2 L1266.8 892.8 L1267.0 862.5 L1267.3 821.0 L1267.5 814.0 L1267.7 824.8 L1267.9 826.9 L1268.1 817.8 L1268.3 807.4 L1268.5 797.8 L1268.7 794.1 L1268.9 811.7 L1269.1 887.0 L1269.3 945.3 L1269.5 826.0 L1269.7 795.2 L1269.9 793.6 L1270.1 812.1 L1270.3 853.9 L1270.5 917.1 L1270.7 900.6 L1270.9 866.7 L1271.1 856.5 L1271.3 853.3 L1271.5 845.3 L1271.7 824.8 L1271.9 800.6 L1272.1 796.3 L1272.3 825.2 L1272.5 895.6 L1272.7 916.2 L1272.9 881.3 L1273.1 856.8 L1273.3 843.8 L1273.5 847.1 L1273.7 852.4 L1273.9 856.4 L1274.1 862.3 L1274.3 843.4 L1274.5 823.1 L1274.7 827.7 L1274.9 866.5 L1275.1 961.4 L1275.3 976.0 L1275.5 976.0 L1275.7 958.6 L1275.9 943.8 L1276.1 929.9 L1276.3 889.9 L1276.5 876.8 L1276.7 876.1 L1276.9 863.5 L1277.1 853.1 L1277.3 856.3 L1277.5 858.2 L1277.7 840.2 L1277.9 821.1 L1278.1 822.0 L1278.3 852.4 L1278.5 924.1 L1278.7 976.0 L1278.9 909.4 L1279.1 881.9 L1279.3 882.5 L1279.5 890.6 L1279.6 864.1 L1279.8 841.6 L1280.0 849.5 L1280.2 886.5 L1280.4 931.4 L1280.6 953.4 L1280.8 974.2 L1281.0 946.6 L1281.2 869.0 L1281.4 810.4 L1281.6 772.2 L1281.8 755.2 L1282.0 760.7 L1282.2 783.9 L1282.3 810.4 L1282.5 832.3 L1282.7 844.2 L1282.9 841.1 L1283.1 832.2 L1283.3 825.7 L1283.5 831.4 L1283.7 856.4 L1283.9 897.6 L1284.1 919.5 L1284.3 893.7 L1284.4 880.0 L1284.6 888.7 L1284.8 894.0 L1285.0 858.0 L1285.2 814.4 L1285.4 787.9 L1285.6 783.1 L1285.8 801.7 L1286.0 844.2 L1286.1 909.3 L1286.3 976.0 L1286.5 976.0 L1286.7 956.2 L1286.9 921.0 L1287.1 916.1 L1287.3 904.1 L1287.4 881.3 L1287.6 858.3 L1287.8 843.4 L1288.0 850.3 L1288.2 896.3 L1288.4 976.0 L1288.6 976.0 L1288.8 971.2 L1288.9 928.8 L1289.1 899.2 L1289.3 895.6 L1289.5 930.7 L1289.7 958.2 L1289.9 919.6 L1290.0 912.2 L1290.2 881.8 L1290.4 834.4 L1290.6 810.4 L1290.8 811.1 L1291.0 833.9 L1291.1 881.0 L1291.3 939.4 L1291.5 866.9 L1291.7 815.2 L1291.9 796.0 L1292.1 797.2 L1292.2 814.5 L1292.4 862.8 L1292.6 925.8 L1292.8 841.8 L1293.0 822.5 L1293.2 843.3 L1293.3 846.8 L1293.5 824.2 L1293.7 820.7 L1293.9 838.0 L1294.1 870.2 L1294.2 910.5 L1294.4 932.2 L1294.6 900.9 L1294.8 854.5 L1295.0 826.2 L1295.1 821.0 L1295.3 831.2 L1295.5 841.5 L1295.7 849.6 L1295.9 841.8 L1296.0 815.3 L1296.2 799.5 L1296.4 798.0 L1296.6 803.2 L1296.7 811.0 L1296.9 826.5 L1297.1 866.6 L1297.3 961.1 L1297.5 952.3 L1297.6 906.6 L1297.8 900.0 L1298.0 874.2 L1298.2 839.6 L1298.3 829.5 L1298.5 839.8 L1298.7 852.8 L1298.9 858.3 L1299.1 870.6 L1299.2 905.5 L1299.4 976.0 L1299.6 976.0 L1299.8 976.0 L1299.9 927.8 L1300.1 849.6 L1300.3 807.3 L1300.5 790.6 L1300.6 795.6 L1300.8 816.4 L1301.0 842.1 L1301.2 859.4 L1301.3 865.7 L1301.5 872.7 L1301.7 884.1 L1301.9 886.5 L1302.0 877.8 L1302.2 881.1 L1302.4 916.2 L1302.5 965.7 L1302.7 976.0 L1302.9 976.0 L1303.1 902.3 L1303.2 886.0 L1303.4 906.5 L1303.6 896.8 L1303.8 860.5 L1303.9 842.2 L1304.1 847.8 L1304.3 868.8 L1304.4 873.4 L1304.6 873.1 L1304.8 889.4 L1305.0 893.9 L1305.1 853.5 L1305.3 820.2 L1305.5 817.3 L1305.6 851.4 L1305.8 932.1 L1306.0 968.2 L1306.2 934.9 L1306.3 907.9 L1306.5 886.7 L1306.7 894.7 L1306.8 939.5 L1307.0 908.6 L1307.2 860.2 L1307.3 841.9 L1307.5 847.2 L1307.7 882.1 L1307.8 976.0 L1308.0 976.0 L1308.2 895.7 L1308.4 874.6 L1308.5 905.8 L1308.7 976.0 L1308.9 938.7 L1309.0 917.4 L1309.2 962.4 L1309.4 976.0 L1309.5 976.0 L1309.7 969.2 L1309.9 905.1 L1310.0 873.0 L1310.2 865.0 L1310.4 886.9 L1310.5 952.8 L1310.7 884.1 L1310.9 830.0 L1311.0 818.7 L1311.2 841.5 L1311.4 893.2 L1311.5 907.8 L1311.7 916.0 L1311.9 976.0 L1312.0 957.7 L1312.2 870.3 L1312.4 831.3 L1312.5 822.4 L1312.7 834.4 L1312.8 845.7 L1313.0 838.0 L1313.2 832.7 L1313.3 859.2 L1313.5 929.0 L1313.7 944.4 L1313.8 961.8 L1314.0 976.0 L1314.2 942.1 L1314.3 878.7 L1314.5 862.6 L1314.6 891.2 L1314.8 976.0 L1315.0 976.0 L1315.1 904.5 L1315.3 862.5 L1315.5 855.5 L1315.6 862.4 L1315.8 863.0 L1315.9 849.7 L1316.1 838.7 L1316.3 844.0 L1316.4 860.2 L1316.6 865.2 L1316.8 843.4 L1316.9 817.4 L1317.1 807.1 L1317.2 820.0 L1317.4 870.8 L1317.6 967.4 L1317.7 918.4 L1317.9 898.2 L1318.0 871.7 L1318.2 829.6 L1318.4 804.4 L1318.5 802.3 L1318.7 819.1 L1318.8 843.8 L1319.0 880.8 L1319.2 976.0 L1319.3 911.2 L1319.5 865.2 L1319.6 874.8 L1319.8 915.8 L1320.0 913.6 L1320.1 883.1 L1320.3 888.2 L1320.4 952.6 L1320.6 895.7 L1320.8 842.9 L1320.9 836.7 L1321.1 851.1 L1321.2 865.2 L1321.4 867.5 L1321.5 848.7 L1321.7 840.6 L1321.9 842.0 L1322.0 838.6 L1322.2 851.1 L1322.3 889.1 L1322.5 939.2 L1322.6 967.6 L1322.8 945.9 L1323.0 909.1 L1323.1 899.2 L1323.3 906.1 L1323.4 865.0 L1323.6 834.6 L1323.7 847.3 L1323.9 911.6 L1324.1 929.9 L1324.2 884.1 L1324.4 873.6 L1324.5 885.1 L1324.7 912.4 L1324.8 966.9 L1325.0 976.0 L1325.1 896.9 L1325.3 833.7 L1325.4 806.0 L1325.6 803.7 L1325.8 825.0 L1325.9 868.7 L1326.1 918.6 L1326.2 930.2 L1326.4 904.2 L1326.5 887.3 L1326.7 877.0 L1326.8 863.7 L1327.0 847.1 L1327.1 830.9 L1327.3 822.9 L1327.4 821.6 L1327.6 818.9 L1327.8 818.6 L1327.9 835.4 L1328.1 884.0 L1328.2 929.5 L1328.4 880.0 L1328.5 858.8 L1328.7 878.7 L1328.8 948.3 L1329.0 976.0 L1329.1 976.0 L1329.3 976.0 L1329.4 906.6 L1329.6 823.7 L1329.7 791.1 L1329.9 789.6 L1330.0 807.5 L1330.2 826.0 L1330.3 840.1 L1330.5 875.5 L1330.6 959.9 L1330.8 976.0 L1330.9 920.4 L1331.1 877.2 L1331.2 873.4 L1331.4 900.9 L1331.5 897.5 L1331.7 851.2 L1331.8 827.8 L1332.0 828.1 L1332.1 837.6 L1332.3 832.2 L1332.4 817.0 L1332.6 813.8 L1332.7 826.3 L1332.9 841.7 L1333.0 837.3 L1333.2 828.0 L1333.3 835.3 L1333.5 863.0 L1333.6 898.8 L1333.8 921.3 L1333.9 944.7 L1334.1 976.0 L1334.2 976.0 L1334.4 976.0 L1334.5 924.5 L1334.7 860.6 L1334.8 834.0 L1335.0 846.5 L1335.1 904.8 L1335.3 976.0 L1335.4 976.0 L1335.6 976.0 L1335.7 976.0 L1335.8 948.0 L1336.0 868.7 L1336.1 842.3 L1336.3 833.1 L1336.4 831.8 L1336.6 854.4 L1336.7 939.1 L1336.9 866.5 L1337.0 805.8 L1337.2 785.3 L1337.3 786.5 L1337.5 801.5 L1337.6 822.9 L1337.7 845.8 L1337.9 871.6 L1338.0 897.8 L1338.2 906.3 L1338.3 885.8 L1338.5 858.6 L1338.6 846.3 L1338.8 857.9 L1338.9 897.0 L1339.1 961.4 L1339.2 976.0 L1339.3 976.0 L1339.5 976.0 L1339.6 976.0 L1339.8 937.0 L1339.9 903.8 L1340.1 890.0 L1340.2 901.1 L1340.4 940.0 L1340.5 976.0 L1340.6 976.0 L1340.8 938.9 L1340.9 882.6 L1341.1 858.8 L1341.2 849.5 L1341.4 842.6 L1341.5 834.7 L1341.6 828.6 L1341.8 827.0 L1341.9 832.4 L1342.1 849.9 L1342.2 887.5 L1342.4 937.9 L1342.5 941.3 L1342.6 898.4 L1342.8 864.3 L1342.9 859.0 L1343.1 889.1 L1343.2 933.3 L1343.3 936.7 L1343.5 931.6 L1343.6 887.6 L1343.8 875.5 L1343.9 924.0 L1344.1 958.0 L1344.2 891.5 L1344.3 878.4 L1344.5 874.6 L1344.6 858.6 L1344.8 838.1 L1344.9 821.9 L1345.0 817.0 L1345.2 822.4 L1345.3 829.3 L1345.5 832.9 L1345.6 838.5 L1345.7 851.7 L1345.9 873.4 L1346.0 893.9 L1346.2 900.0 L1346.3 886.0 L1346.4 858.1 L1346.6 835.4 L1346.7 827.0 L1346.9 834.9 L1347.0 862.3 L1347.1 907.9 L1347.3 945.1 L1347.4 945.5 L1347.5 932.4 L1347.7 919.1 L1347.8 910.1 L1348.0 920.3 L1348.1 950.3 L1348.2 959.0 L1348.4 923.2 L1348.5 897.3 L1348.7 910.6 L1348.8 976.0 L1348.9 970.1 L1349.1 885.5 L1349.2 852.4 L1349.3 840.9 L1349.5 845.0 L1349.6 858.0 L1349.8 861.4 L1349.9 845.3 L1350.0 830.0 L1350.2 833.3 L1350.3 859.9 L1350.4 909.6 L1350.6 927.2 L1350.7 902.8 L1350.9 911.6 L1351.0 967.0 L1351.1 976.0 L1351.3 950.6 L1351.4 905.6 L1351.5 892.9 L1351.7 905.5 L1351.8 932.3 L1351.9 958.3 L1352.1 976.0 L1352.2 976.0 L1352.3 976.0 L1352.5 966.6 L1352.6 918.0 L1352.8 914.8 L1352.9 971.9 L1353.0 976.0 L1353.2 960.3 L1353.3 946.8 L1353.4 961.0 L1353.6 961.0 L1353.7 921.5 L1353.8 879.7 L1354.0 855.1 L1354.1 849.0 L1354.2 857.0 L1354.4 866.8 L1354.5 869.5 L1354.6 877.2 L1354.8 913.1 L1354.9 932.7 L1355.0 867.4 L1355.2 850.1 L1355.3 882.6 L1355.4 883.4 L1355.6 824.2 L1355.7 807.7 L1355.8 831.1 L1356.0 910.5 L1356.1 966.6 L1356.2 912.8 L1356.4 917.6 L1356.5 941.6 L1356.6 976.0 L1356.8 976.0 L1356.9 946.2 L1357.0 888.2 L1357.2 861.9 L1357.3 856.4 L1357.4 870.6 L1357.6 896.8 L1357.7 920.2 L1357.8 952.6 L1358.0 976.0 L1358.1 967.5 L1358.2 944.6 L1358.3 976.0 L1358.5 976.0 L1358.6 942.5 L1358.7 914.7 L1358.9 931.8 L1359.0 935.7 L1359.1 880.2 L1359.3 854.2 L1359.4 854.9 L1359.5 870.7 L1359.7 880.0 L1359.8 867.8 L1359.9 860.4 L1360.1 865.7 L1360.2 875.2 L1360.3 889.4 L1360.4 909.6 L1360.6 938.3 L1360.7 942.0 L1360.8 905.3 L1361.0 879.8 L1361.1 865.0 L1361.2 860.9 L1361.3 871.2 L1361.5 894.7 L1361.6 914.4 L1361.7 916.1 L1361.9 893.5 L1362.0 863.5 L1362.1 849.1 L1362.3 847.6 L1362.4 831.4 L1362.5 806.3 L1362.6 794.7 L1362.8 799.5 L1362.9 822.6 L1363.0 878.3 L1363.2 976.0 L1363.3 902.4 L1363.4 875.0 L1363.5 879.7 L1363.7 884.8 L1363.8 906.4 L1363.9 974.8 L1364.1 911.9 L1364.2 856.0 L1364.3 838.1 L1364.4 849.7 L1364.6 893.5 L1364.7 955.2 L1364.8 923.8 L1364.9 933.5 L1365.1 976.0 L1365.2 916.6 L1365.3 891.0 L1365.5 894.6 L1365.6 868.7 L1365.7 853.5 L1365.8 857.8 L1366.0 866.5 L1366.1 869.6 L1366.2 874.0 L1366.3 890.2 L1366.5 931.1 L1366.6 976.0 L1366.7 976.0 L1366.8 921.0 L1367.0 910.5 L1367.1 920.9 L1367.2 936.9 L1367.3 941.5 L1367.5 930.4 L1367.6 915.6 L1367.7 900.3 L1367.8 888.6 L1368.0 886.6 L1368.1 881.1 L1368.2 862.3 L1368.4 844.5 L1368.5 836.5 L1368.6 840.2 L1368.7 862.7 L1368.8 901.4 L1369.0 912.5 L1369.1 935.8 L1369.2 963.2 L1369.3 885.1 L1369.5 858.5 L1369.6 868.2 L1369.7 892.7 L1369.8 882.7 L1370.0 852.9 L1370.1 850.7 L1370.2 887.2 L1370.3 952.7 L1370.5 932.9 L1370.6 893.9 L1370.7 877.6 L1370.8 882.2 L1371.0 892.7 L1371.1 904.2 L1371.2 949.6 L1371.3 976.0 L1371.5 940.2 L1371.6 905.8 L1371.7 901.2 L1371.8 882.0 L1371.9 846.2 L1372.1 826.7 L1372.2 828.0 L1372.3 850.8 L1372.4 915.5 L1372.6 952.9 L1372.7 881.3 L1372.8 872.1 L1372.9 891.7 L1373.0 918.0 L1373.2 935.1 L1373.3 954.0 L1373.4 943.4 L1373.5 882.0 L1373.7 843.3 L1373.8 829.5 L1373.9 833.2 L1374.0 841.5 L1374.1 827.5 L1374.3 806.3 L1374.4 799.9 L1374.5 808.5 L1374.6 821.0 L1374.8 820.0 L1374.9 808.2 L1375.0 804.8 L1375.1 825.5 L1375.2 886.7 L1375.4 971.4 L1375.5 921.8 L1375.6 918.5 L1375.7 950.3 L1375.8 976.0 L1376.0 967.2 L1376.1 942.7 L1376.2 971.6 L1376.3 930.9 L1376.4 854.5 L1376.6 828.7 L1376.7 839.8 L1376.8 897.6 L1376.9 915.0 L1377.0 839.9 L1377.2 812.0 L1377.3 811.3 L1377.4 833.1 L1377.5 883.3 L1377.6 976.0 L1377.8 963.8 L1377.9 934.4 L1378.0 976.0 L1378.1 960.5 L1378.2 878.8 L1378.4 852.9 L1378.5 849.4 L1378.6 854.5 L1378.7 870.0 L1378.8 912.2 L1379.0 976.0 L1379.1 947.9 L1379.2 882.4 L1379.3 852.4 L1379.4 842.1 L1379.5 849.1 L1379.7 873.2 L1379.8 901.1 L1379.9 915.4 L1380.0 910.0 L1380.1 876.8 L1380.3 846.1 L1380.4 829.1 L1380.5 823.5 L1380.6 827.7 L1380.7 839.7 L1380.8 855.6 L1381.0 877.1 L1381.1 912.3 L1381.2 942.8 L1381.3 943.4 L1381.4 936.8 L1381.5 926.8 L1381.7 935.8 L1381.8 968.8 L1381.9 929.1 L1382.0 884.0 L1382.1 867.9 L1382.2 871.1 L1382.4 885.7 L1382.5 902.0 L1382.6 908.0 L1382.7 871.5 L1382.8 838.0 L1382.9 835.4 L1383.1 865.7 L1383.2 943.9 L1383.3 976.0 L1383.4 891.2 L1383.5 840.1 L1383.6 817.3 L1383.8 814.1 L1383.9 826.0 L1384.0 856.1 L1384.1 902.6 L1384.2 923.3 L1384.3 924.4 L1384.5 939.0 L1384.6 968.8 L1384.7 958.0 L1384.8 943.2 L1384.9 976.0 L1385.0 976.0 L1385.1 934.4 L1385.3 945.3 L1385.4 976.0 L1385.5 957.5 L1385.6 899.9 L1385.7 876.5 L1385.8 875.5 L1386.0 885.9 L1386.1 893.8 L1386.2 894.6 L1386.3 887.1 L1386.4 871.2 L1386.5 864.9 L1386.6 880.2 L1386.8 912.5 L1386.9 928.2 L1387.0 888.4 L1387.1 847.2 L1387.2 829.1 L1387.3 837.8 L1387.4 877.9 L1387.6 955.9 L1387.7 948.0 L1387.8 898.4 L1387.9 867.1 L1388.0 848.5 L1388.1 846.6 L1388.2 870.4 L1388.3 949.8 L1388.5 976.0 L1388.6 882.9 L1388.7 846.2 L1388.8 823.5 L1388.9 810.7 L1389.0 811.6 L1389.1 828.7 L1389.3 862.0 L1389.4 893.9 L1389.5 911.9 L1389.6 941.6 L1389.7 952.9 L1389.8 913.8 L1389.9 886.5 L1390.0 883.1 L1390.2 889.0 L1390.3 883.1 L1390.4 871.3 L1390.5 869.8 L1390.6 878.7 L1390.7 890.7 L1390.8 904.1 L1390.9 899.0 L1391.0 866.5 L1391.2 841.3 L1391.3 830.5 L1391.4 830.1 L1391.5 835.2 L1391.6 845.8 L1391.7 857.1 L1391.8 846.3 L1391.9 822.0 L1392.1 807.4 L1392.2 809.9 L1392.3 834.4 L1392.4 897.4 L1392.5 930.1 L1392.6 841.1 L1392.7 800.8 L1392.8 782.5 L1392.9 778.2 L1393.1 785.0 L1393.2 802.7 L1393.3 835.4 L1393.4 899.6 L1393.5 976.0 L1393.6 896.9 L1393.7 846.5 L1393.8 831.7 L1393.9 844.8 L1394.0 893.5 L1394.2 976.0 L1394.3 942.4 L1394.4 953.2 L1394.5 968.5 L1394.6 902.9 L1394.7 878.9 L1394.8 888.3 L1394.9 866.8 L1395.0 820.4 L1395.1 806.5 L1395.3 833.6 L1395.4 933.7 L1395.5 881.9 L1395.6 856.1 L1395.7 887.7 L1395.8 903.5 L1395.9 900.8 L1396.0 933.2 L1396.1 893.6 L1396.2 860.6 L1396.3 860.2 L1396.5 877.5 L1396.6 881.3 L1396.7 876.5 L1396.8 877.8 L1396.9 877.2 L1397.0 884.9 L1397.1 914.0 L1397.2 950.8 L1397.3 948.3 L1397.4 925.9 L1397.5 914.5 L1397.6 926.0 L1397.8 916.9 L1397.9 866.6 L1398.0 839.3 L1398.1 838.0 L1398.2 860.1 L1398.3 908.1 L1398.4 976.0 L1398.5 959.9 L1398.6 908.6 L1398.7 899.3 L1398.8 910.2 L1398.9 914.0 L1399.1 889.6 L1399.2 870.6 L1399.3 873.8 L1399.4 894.4 L1399.5 924.3 L1399.6 908.5 L1399.7 853.0 L1399.8 824.4 L1399.9 818.1 L1400.0 823.2 L1400.1 834.7 L1400.2 865.0 L1400.3 953.5 L1400.4 923.7 L1400.6 872.3 L1400.7 859.5 L1400.8 850.2 L1400.9 837.6 L1401.0 829.8 L1401.1 834.3 L1401.2 861.4 L1401.3 912.1 L1401.4 908.4 L1401.5 891.2 L1401.6 904.6 L1401.7 942.6 L1401.8 966.1 L1401.9 969.1 L1402.0 927.1 L1402.1 888.7 L1402.2 857.2 L1402.4 843.2 L1402.5 859.8 L1402.6 916.9 L1402.7 947.3 L1402.8 900.5 L1402.9 877.7 L1403.0 874.9 L1403.1 893.8 L1403.2 914.4 L1403.3 891.9 L1403.4 869.6 L1403.5 861.7 L1403.6 856.3 L1403.7 842.9 L1403.8 827.2 L1403.9 819.7 L1404.0 829.2 L1404.1 865.6 L1404.3 905.9 L1404.4 863.0 L1404.5 831.8 L1404.6 819.4 L1404.7 817.5 L1404.8 822.7 L1404.9 839.3 L1405.0 872.6 L1405.1 883.4 L1405.2 833.7 L1405.3 801.5 L1405.4 796.9 L1405.5 816.4 L1405.6 850.6 L1405.7 872.3 L1405.8 857.9 L1405.9 858.9 L1406.0 913.0 L1406.1 895.2 L1406.2 836.7 L1406.3 823.4 L1406.4 838.3 L1406.5 860.6 L1406.6 856.8 L1406.7 838.6 L1406.9 821.3 L1407.0 811.9 L1407.1 815.8 L1407.2 832.4 L1407.3 848.3 L1407.4 844.6 L1407.5 835.8 L1407.6 837.9 L1407.7 845.2 L1407.8 847.1 L1407.9 841.7 L1408.0 837.7 L1408.1 843.8 L1408.2 859.7 L1408.3 884.3 L1408.4 907.0 L1408.5 904.4 L1408.6 888.7 L1408.7 882.9 L1408.8 874.2 L1408.9 848.3 L1409.0 828.0 L1409.1 829.4 L1409.2 865.0 L1409.3 950.3 L1409.4 935.2 L1409.5 927.3 L1409.6 974.2 L1409.7 976.0 L1409.8 976.0 L1409.9 953.8 L1410.0 950.8 L1410.1 976.0 L1410.2 914.0 L1410.3 865.2 L1410.4 848.1 L1410.5 829.3 L1410.6 812.0 L1410.7 809.8 L1410.8 824.2 L1410.9 846.6 L1411.0 856.2 L1411.2 847.8 L1411.3 846.7 L1411.4 873.0 L1411.5 920.3 L1411.6 894.6 L1411.7 870.8 L1411.8 865.2 L1411.9 873.2 L1412.0 910.3 L1412.1 976.0 L1412.2 947.7 L1412.3 900.6 L1412.4 882.6 L1412.5 877.4 L1412.6 884.7 L1412.7 898.4 L1412.8 897.1 L1412.9 874.3 L1413.0 856.7 L1413.1 861.5 L1413.2 899.4 L1413.3 976.0 L1413.4 915.9 L1413.5 872.1 L1413.6 874.5 L1413.7 918.3 L1413.8 904.1 L1413.9 856.6 L1414.0 827.9 L1414.1 808.9 L1414.2 800.8 L1414.3 807.9 L1414.4 836.3 L1414.5 900.4 L1414.6 956.2 L1414.7 875.0 L1414.8 837.7 L1414.9 823.1 L1415.0 826.5 L1415.1 848.6 L1415.2 886.4 L1415.3 929.9 L1415.4 973.2 L1415.5 888.1 L1415.6 829.0 L1415.7 805.0 L1415.8 807.2 L1415.9 829.4 L1416.0 865.1 L1416.1 898.2 L1416.2 906.7 L1416.3 948.8 L1416.4 976.0 L1416.5 976.0 L1416.6 976.0 L1416.7 962.7 L1416.8 976.0 L1416.9 976.0 L1417.0 976.0 L1417.1 976.0 L1417.2 976.0 L1417.3 925.9 L1417.4 877.8 L1417.5 840.1 L1417.6 823.6 L1417.7 836.3 L1417.8 882.7 L1417.9 925.1 L1418.0 938.2 L1418.1 907.7 L1418.2 858.6 L1418.3 835.2 L1418.4 827.8 L1418.5 830.7 L1418.6 840.0 L1418.7 841.0 L1418.8 825.9 L1418.9 811.8 L1419.0 809.3 L1419.1 821.2 L1419.2 852.5 L1419.3 926.9 L1419.4 976.0 L1419.5 892.8 L1419.6 861.3 L1419.7 850.0 L1419.8 846.5 L1419.9 846.9 L1420.0 853.9 L1420.1 868.6 L1420.2 886.7 L1420.3 908.8 L1420.4 921.1 L1420.5 905.9 L1420.6 956.8 L1420.7 916.2 L1420.8 868.6 L1420.9 862.7 L1421.0 875.9 L1421.1 871.3 L1421.2 856.5 L1421.3 849.4 L1421.4 840.2 L1421.5 830.2 L1421.6 834.6 L1421.7 863.6 L1421.8 925.3 L1421.9 933.5 L1422.0 888.4 L1422.1 877.1 L1422.2 864.8 L1422.3 835.9 L1422.4 824.2 L1422.5 834.9 L1422.6 855.2 L1422.7 865.8 L1422.8 864.2 L1422.9 862.8 L1423.0 915.1 L1423.1 970.8 L1423.2 904.4 L1423.3 860.9 L1423.4 848.9 L1423.5 853.3 L1423.6 869.2 L1423.7 912.8 L1423.8 976.0 L1423.9 911.0 L1424.0 885.1 L1424.1 887.3 L1424.2 917.1 L1424.3 976.0 L1424.4 925.0 L1424.5 887.6 L1424.6 902.3 L1424.7 949.7 L1424.8 976.0 L1424.9 867.9 L1425.0 840.4 L1425.1 843.2 L1425.2 860.5 L1425.3 861.5 L1425.4 856.5 L1425.5 869.4 L1425.6 906.3 L1425.7 903.6 L1425.8 869.8 L1425.9 862.9 L1426.0 877.4 L1426.1 894.2 L1426.2 892.7 L1426.3 879.1 L1426.4 860.9 L1426.5 853.3 L1426.6 870.9 L1426.7 922.3 L1426.8 957.3 L1426.9 898.2 L1427.0 873.2 L1427.1 871.0 L1427.2 889.2 L1427.3 923.5 L1427.4 950.1 L1427.5 938.1 L1427.6 905.3 L1427.7 881.1 L1427.8 865.2 L1427.9 845.9 L1428.0 849.3 L1428.1 871.4 L1428.2 884.3 L1428.3 889.0 L1428.4 896.4 L1428.5 911.4 L1428.6 955.8 L1428.7 976.0 L1428.8 976.0 L1428.9 976.0 L1429.0 930.6 L1429.1 917.6 L1429.2 946.1 L1429.3 967.6 L1429.4 913.5 L1429.5 898.9 L1429.6 910.3 L1429.7 950.6 L1429.8 976.0 L1429.9 976.0 L1430.0 954.9 L1430.1 938.6 L1430.2 915.4 L1430.3 910.5 L1430.4 909.4 L1430.5 905.8 L1430.6 944.4 L1430.7 974.7 L1430.8 908.9 L1430.9 875.8 L1431.0 849.4 L1431.1 826.4 L1431.2 819.9 L1431.3 834.2 L1431.4 869.5 L1431.5 924.0 L1431.6 976.0 L1431.7 915.5 L1431.8 908.9 L1431.9 976.0 L1432.0 976.0 L1432.1 914.1 L1432.2 911.1 L1432.3 936.6 L1432.4 940.7 L1432.5 922.4 L1432.6 913.3 L1432.7 914.8 L1432.8 925.6 L1432.9 931.9 L1433.0 902.4 L1433.1 877.6 L1433.2 876.2 L1433.3 895.7 L1433.4 927.2 L1433.5 952.6 L1433.6 950.2 L1433.7 912.3 L1433.8 899.0 L1433.9 903.7 L1434.0 905.8 L1434.1 872.8 L1434.2 844.5 L1434.3 844.9 L1434.4 877.8 L1434.5 920.0 L1434.6 923.9 L1434.7 976.0 L1434.8 959.9 L1434.9 900.1 L1435.0 854.5 L1435.1 826.4 L1435.2 815.9 L1435.3 822.8 L1435.4 850.8 L1435.5 976.0 L1435.6 910.4 L1435.7 884.2 L1435.8 887.4 L1435.9 911.4 L1436.0 976.0 L1436.1 976.0 L1436.2 921.1 L1436.3 910.9 L1436.4 976.0 L1436.5 976.0 L1436.6 976.0 L1436.7 916.3 L1436.8 851.3 L1436.9 833.1 L1437.0 844.6 L1437.1 876.0 L1437.2 913.0 L1437.3 882.0 L1437.4 860.3 L1437.5 854.6 L1437.6 854.6 L1437.7 850.2 L1437.8 841.5 L1437.9 828.9 L1438.0 812.1 L1438.1 821.3 L1438.2 844.2 L1438.3 861.8 L1438.4 860.8 L1438.5 873.3 L1438.6 924.5 L1438.7 976.0 L1438.8 879.8 L1438.9 864.9 L1439.0 856.0 L1439.1 838.7 L1439.2 821.8 L1439.3 824.6 L1439.4 854.9 L1439.5 847.8 L1439.6 866.0 L1439.7 913.2 L1439.8 935.1 L1439.9 952.9 L1440.0 972.6 L1440.1 973.7 L1440.2 976.0 L1440.3 960.2 L1440.4 900.0 L1440.5 861.8 L1440.6 841.6 L1440.7 830.4 L1440.8 818.3 L1440.9 809.0 L1441.0 829.1 L1441.1 874.3 L1441.2 912.6 L1441.3 858.3 L1441.4 829.9 L1441.5 831.0 L1441.6 821.4 L1441.7 817.8 L1441.8 834.7 L1441.9 860.9 L1442.0 875.6 L1442.1 869.4 L1442.2 856.9 L1442.3 867.1 L1442.4 910.8 L1442.5 976.0 L1442.6 911.1 L1442.7 865.4 L1442.8 838.0 L1442.9 809.3 L1443.0 804.6 L1443.1 808.0 L1443.2 821.0 L1443.3 842.8 L1443.4 853.8 L1443.5 840.9 L1443.6 857.8 L1443.7 917.0 L1443.8 976.0 L1443.9 968.8 L1444.0 976.0 L1444.1 928.8 L1444.2 844.0 L1444.3 855.1 L1444.4 890.3 L1444.5 930.1 L1444.6 910.9 L1444.7 894.3 L1444.8 853.6 L1444.9 843.8 L1445.0 877.0 L1445.1 976.0 L1445.2 894.9 L1445.3 857.6 L1445.4 860.9 L1445.5 881.9 L1445.6 907.4 L1445.7 936.3 L1445.8 945.2 L1445.9 912.0 L1446.0 885.3 L1446.1 892.3 L1446.2 895.0 L1446.3 881.6 L1446.4 866.2 L1446.5 858.7 L1446.6 846.1 L1446.7 841.3 L1446.8 859.1 L1446.9 904.1 L1447.0 961.2 L1447.1 865.7 L1447.2 849.0 L1447.3 849.8 L1447.4 871.5 L1447.5 917.7 L1447.6 878.0 L1447.7 837.4 L1447.8 854.9 L1447.9 884.8 L1448.0 914.6 L1448.1 905.4 L1448.2 874.3 L1448.3 878.7 L1448.4 879.8 L1448.5 885.2 L1448.6 870.4 L1448.7 818.7 L1448.8 814.7 L1448.9 816.5 L1449.0 819.3 L1449.1 825.7 L1449.2 836.1 L1449.3 866.5 L1449.4 896.5 L1449.5 939.3 L1449.6 948.4 L1449.7 917.3 L1449.8 849.1 L1449.9 836.0 L1450.0 835.6 L1450.1 841.5 L1450.2 843.8 L1450.3 826.6 L1450.4 817.2 L1450.5 815.1 L1450.6 823.7 L1450.7 849.7 L1450.8 948.9 L1450.9 857.3 L1451.0 828.5 L1451.1 813.9 L1451.2 801.9 L1451.3 797.6 L1451.4 811.2 L1451.5 838.2 L1451.6 884.1 L1451.7 971.9 L1451.8 890.9 L1451.9 869.4 L1452.0 867.5 L1452.1 851.8 L1452.2 809.7 L1452.3 808.6 L1452.4 822.7 L1452.5 842.3 L1452.6 854.9 L1452.7 897.1 L1452.8 976.0 L1452.9 976.0 L1453.0 968.1 L1453.1 891.4 L1453.2 823.3 L1453.3 823.4 L1453.4 837.9 L1453.5 858.5 L1453.6 866.3 L1453.7 859.4 L1453.8 855.6 L1453.9 837.0 L1454.0 818.1 L1454.1 826.0 L1454.2 856.8 L1454.3 877.7 L1454.4 856.2 L1454.5 856.8 L1454.6 855.7 L1454.7 859.5 L1454.8 884.7 L1455.0 976.0 L1455.0 947.9 L1455.1 907.6 L1455.2 892.4 L1455.4 922.7 L1455.4 878.8 L1455.5 862.7 L1455.6 879.2 L1455.7 921.8 L1455.8 878.2 L1455.9 848.3 L1456.0 834.6 L1456.1 831.9 L1456.3 904.6 L1456.3 976.0 L1456.4 976.0 L1456.5 976.0 L1456.7 908.2 L1456.7 921.6 L1456.8 965.4 L1456.9 976.0 L1457.1 897.5 L1457.1 873.3 L1457.2 869.0 L1457.3 872.9 L1457.5 927.4 L1457.5 976.0 L1457.6 976.0 L1457.7 951.2 L1457.9 902.7 L1457.9 976.0 L1458.0 961.7 L1458.1 902.6 L1458.3 976.0 L1458.3 886.0 L1458.4 835.8 L1458.6 849.1 L1458.7 949.5 L1458.7 911.4 L1458.8 880.6 L1459.0 976.0 L1459.1 894.6 L1459.1 865.8 L1459.2 839.6 L1459.4 791.4 L1459.5 787.3 L1459.5 801.1 L1459.6 826.3 L1459.8 836.7 L1459.9 855.6 L1459.9 882.7 L1460.1 889.9 L1460.2 881.7 L1460.3 887.0 L1460.3 915.0 L1460.5 891.8 L1460.6 864.6 L1460.7 843.2 L1460.7 829.1 L1460.9 826.2 L1461.0 830.3 L1461.1 838.1 L1461.2 842.2 L1461.3 838.0 L1461.4 840.7 L1461.4 860.4 L1461.6 976.0 L1461.7 897.0 L1461.8 867.4 L1461.9 846.3 L1462.0 846.9 L1462.1 863.3 L1462.2 911.9 L1462.3 835.7 L1462.4 807.4 L1462.5 797.7 L1462.6 815.7 L1462.7 846.2 L1462.8 881.2 L1462.9 853.2 L1463.0 851.7 L1463.1 879.6 L1463.2 898.5 L1463.3 917.5 L1463.4 954.4 L1463.5 904.8 L1463.6 908.5 L1463.7 976.0 L1463.8 916.0 L1464.0 817.3 L1464.0 804.9 L1464.1 803.3 L1464.2 815.9 L1464.3 890.5 L1464.4 960.9 L1464.5 976.0 L1464.7 843.4 L1464.7 830.4 L1464.8 845.8 L1465.0 927.4 L1465.0 917.0 L1465.1 887.4 L1465.3 826.5 L1465.4 817.9 L1465.4 836.0 L1465.6 939.2 L1465.7 861.3 L1465.7 851.0 L1465.8 878.6 L1466.0 904.1 L1466.1 893.0 L1466.1 949.9 L1466.3 846.4 L1466.4 813.6 L1466.4 799.5 L1466.6 806.4 L1466.7 834.4 L1466.7 891.4 L1466.9 853.2 L1467.0 831.7 L1467.1 828.5 L1467.2 850.4 L1467.3 866.3 L1467.4 901.7 L1467.5 890.0 L1467.6 857.0 L1467.7 842.0 L1467.8 826.7 L1467.9 810.2 L1468.0 800.6 L1468.1 808.6 L1468.2 814.3 L1468.3 821.0 L1468.4 863.1 L1468.5 910.3 L1468.6 949.9 L1468.7 926.4 L1468.8 873.2 L1469.0 815.3 L1469.0 816.5 L1469.1 832.3 L1469.3 854.7 L1469.3 846.4 L1469.4 835.7 L1469.6 807.5 L1469.7 794.7 L1469.7 791.0 L1469.9 800.9 L1470.0 799.6 L1470.0 797.5 L1470.2 831.1 L1470.3 874.5 L1470.3 894.9 L1470.5 867.9 L1470.6 872.6 L1470.7 876.1 L1470.8 862.6 L1470.9 873.8 L1471.0 919.8 L1471.1 929.9 L1471.2 870.5 L1471.3 811.6 L1471.4 806.4 L1471.5 811.6 L1471.6 877.3 L1471.7 933.1 L1471.8 888.7 L1471.9 902.4 L1472.0 869.7 L1472.1 865.2 L1472.2 893.3 L1472.3 934.1 L1472.4 853.9 L1472.5 820.0 L1472.7 842.9 L1472.7 868.4 L1472.8 876.2 L1473.0 851.8 L1473.0 864.4 L1473.1 907.6 L1473.3 969.7 L1473.3 907.4 L1473.5 845.2 L1473.6 848.9 L1473.6 863.7 L1473.8 862.5 L1473.9 867.1 L1474.0 834.7 L1474.1 823.5 L1474.1 825.1 L1474.3 844.7 L1474.4 861.7 L1474.5 882.4 L1474.6 885.1 L1474.7 887.8 L1474.8 832.2 L1474.9 822.5 L1475.0 807.5 L1475.1 808.7 L1475.2 824.0 L1475.3 890.8 L1475.4 968.2 L1475.6 863.3 L1475.6 841.2 L1475.7 831.7 L1475.8 836.3 L1475.9 856.8 L1476.1 885.8 L1476.1 914.9 L1476.2 954.8 L1476.4 857.5 L1476.4 849.8 L1476.6 824.0 L1476.7 828.6 L1476.7 859.1 L1476.9 928.9 L1476.9 914.3 L1477.1 901.4 L1477.2 921.8 L1477.3 960.9 L1477.4 933.2 L1477.5 953.3 L1477.6 938.7 L1477.7 881.9 L1477.8 881.2 L1477.9 943.3 L1478.0 976.0 L1478.1 903.2 L1478.2 898.6 L1478.3 877.7 L1478.4 879.3 L1478.6 936.4 L1478.6 947.3 L1478.7 955.5 L1478.8 956.0 L1478.9 948.0 L1479.1 955.3 L1479.1 937.4 L1479.3 881.8 L1479.3 872.8 L1479.5 899.4 L1479.6 922.5 L1479.6 926.7 L1479.8 846.8 L1479.9 835.5 L1480.0 815.3 L1480.1 812.6 L1480.2 807.9 L1480.3 815.2 L1480.4 906.6 L1480.5 964.6 L1480.6 933.5 L1480.7 949.0 L1480.8 930.4 L1480.9 852.5 L1481.0 844.5 L1481.1 844.5 L1481.2 826.8 L1481.4 807.0 L1481.4 812.5 L1481.5 834.1 L1481.6 907.9 L1481.7 836.4 L1481.9 857.4 L1481.9 884.0 L1482.1 929.2 L1482.1 965.2 L1482.3 976.0 L1482.4 976.0 L1482.5 885.0 L1482.6 906.0 L1482.7 900.3 L1482.8 862.4 L1482.9 849.4 L1483.0 852.4 L1483.1 852.4 L1483.2 901.0 L1483.3 976.0 L1483.4 882.2 L1483.5 866.3 L1483.6 976.0 L1483.7 888.4 L1483.8 843.2 L1483.9 868.8 L1484.1 976.0 L1484.1 951.5 L1484.3 902.5 L1484.3 890.5 L1484.5 869.4 L1484.6 879.2 L1484.7 880.1 L1484.8 848.4 L1484.9 812.2 L1485.0 820.0 L1485.1 879.1 L1485.2 896.0 L1485.3 930.5 L1485.4 922.1 L1485.5 916.8 L1485.6 911.6 L1485.7 885.1 L1485.8 952.5 L1486.0 867.2 L1486.0 869.1 L1486.2 875.2 L1486.2 863.7 L1486.4 861.0 L1486.4 838.0 L1486.6 850.8 L1486.7 902.7 L1486.8 976.0 L1486.9 952.3 L1487.0 873.4 L1487.1 861.0 L1487.2 895.3 L1487.3 901.0 L1487.4 869.6 L1487.5 883.2 L1487.6 878.9 L1487.7 902.8 L1487.8 849.6 L1487.9 822.9 L1488.0 833.9 L1488.1 879.2 L1488.3 976.0 L1488.3 976.0 L1488.5 918.7 L1488.5 942.4 L1488.7 921.3 L1488.7 917.3 L1488.9 857.9 L1488.9 839.9 L1489.1 858.1 L1489.2 842.8 L1489.3 824.5 L1489.4 931.5 L1489.5 976.0 L1489.6 869.6 L1489.7 849.1 L1489.8 976.0 L1489.9 890.0 L1490.0 816.5 L1490.1 813.5 L1490.3 864.7 L1490.3 889.5 L1490.5 929.9 L1490.5 899.4 L1490.7 858.4 L1490.8 897.0 L1490.9 911.0 L1491.0 892.6 L1491.1 885.7 L1491.2 889.8 L1491.3 827.8 L1491.4 787.2 L1491.5 788.9 L1491.6 817.1 L1491.8 821.1 L1491.8 831.2 L1492.0 976.0 L1492.0 963.3 L1492.2 885.0 L1492.2 883.8 L1492.4 876.0 L1492.4 834.8 L1492.6 812.8 L1492.7 815.4 L1492.8 812.9 L1492.9 812.1 L1493.0 828.1 L1493.1 927.7 L1493.2 976.0 L1493.3 976.0 L1493.4 861.6 L1493.5 845.4 L1493.6 860.8 L1493.7 855.2 L1493.8 854.8 L1493.9 882.8 L1494.0 956.9 L1494.2 912.6 L1494.3 884.6 L1494.4 875.4 L1494.5 876.2 L1494.6 944.9 L1494.7 976.0 L1494.8 976.0 L1494.9 976.0 L1495.0 976.0 L1495.1 852.2 L1495.2 826.9 L1495.3 817.0 L1495.5 828.2 L1495.5 852.2 L1495.7 916.5 L1495.7 956.4 L1495.9 976.0 L1496.0 976.0 L1496.1 936.8 L1496.2 884.3 L1496.3 874.0 L1496.4 864.3 L1496.5 870.0 L1496.6 894.9 L1496.7 847.0 L1496.8 809.6 L1496.9 783.2 L1497.1 824.7 L1497.1 863.5 L1497.2 864.9 L1497.3 867.6 L1497.4 865.4 L1497.6 899.1 L1497.6 952.0 L1497.8 976.0 L1497.8 976.0 L1498.0 864.9 L1498.1 835.8 L1498.2 830.9 L1498.3 883.6 L1498.4 943.7 L1498.5 974.8 L1498.6 864.5 L1498.7 867.3 L1498.8 976.0 L1499.0 931.3 L1499.0 893.2 L1499.2 894.8 L1499.3 877.1 L1499.4 866.9 L1499.5 918.0 L1499.6 976.0 L1499.7 862.1 L1499.8 857.9 L1499.9 847.8 L1500.0 837.5 L1500.1 856.0 L1500.2 948.6 L1500.3 868.7 L1500.5 893.3 L1500.5 828.8 L1500.7 813.6 L1500.7 828.5 L1500.9 859.6 L1501.0 849.8 L1501.1 839.1 L1501.2 829.4 L1501.3 852.5 L1501.4 911.8 L1501.5 900.3 L1501.6 944.7 L1501.7 960.8 L1501.8 877.4 L1502.0 909.5 L1502.0 910.4 L1502.2 853.0 L1502.3 794.3 L1502.3 809.8 L1502.5 889.1 L1502.6 855.7 L1502.7 836.8 L1502.8 824.4 L1502.9 822.0 L1503.0 835.4 L1503.1 932.9 L1503.2 837.5 L1503.3 821.7 L1503.4 861.8 L1503.6 838.5 L1503.6 815.8 L1503.8 808.3 L1503.9 874.5 L1504.0 878.6 L1504.1 829.0 L1504.2 838.4 L1504.3 841.4 L1504.4 822.8 L1504.5 832.7 L1504.6 840.8 L1504.7 840.3 L1504.8 833.6 L1505.0 861.0 L1505.0 880.4 L1505.2 919.3 L1505.3 913.7 L1505.4 886.8 L1505.5 845.0 L1505.6 852.6 L1505.7 813.1 L1505.8 834.7 L1505.9 946.3 L1506.0 894.3 L1506.1 964.3 L1506.2 869.6 L1506.4 904.8 L1506.4 869.0 L1506.6 895.8 L1506.7 911.3 L1506.7 893.6 L1506.9 859.1 L1507.0 903.1 L1507.1 879.0 L1507.2 834.0 L1507.3 842.6 L1507.4 976.0 L1507.5 911.5 L1507.6 877.1 L1507.8 834.6 L1507.9 770.0 L1507.9 762.9 L1508.1 780.3 L1508.2 807.0 L1508.3 817.8 L1508.4 865.1 L1508.5 857.9 L1508.6 893.9 L1508.7 914.7 L1508.8 954.9 L1508.9 879.3 L1509.1 826.3 L1509.1 845.1 L1509.3 864.6 L1509.4 873.5 L1509.5 969.2 L1509.6 976.0 L1509.7 926.5 L1509.8 900.3 L1509.9 891.2 L1510.0 928.2 L1510.1 883.3 L1510.3 900.0 L1510.3 976.0 L1510.4 838.8 L1510.6 906.5 L1510.7 832.6 L1510.7 823.0 L1510.9 912.2 L1511.0 822.0 L1511.1 843.8 L1511.2 880.8 L1511.3 849.0 L1511.4 847.4 L1511.6 920.8 L1511.7 934.4 L1511.7 865.3 L1511.9 787.4 L1512.0 773.4 L1512.1 795.7 L1512.2 826.4 L1512.3 976.0 L1512.4 881.2 L1512.5 842.3 L1512.6 831.4 L1512.7 824.7 L1512.8 857.2 L1513.0 976.0 L1513.1 844.8 L1513.1 850.5 L1513.3 904.9 L1513.4 871.6 L1513.5 829.3 L1513.6 845.9 L1513.7 864.1 L1513.8 831.6 L1513.9 838.9 L1514.1 841.8 L1514.1 832.7 L1514.2 815.7 L1514.4 788.2 L1514.5 798.4 L1514.6 883.7 L1514.7 956.8 L1514.8 913.3 L1514.9 926.5 L1515.0 921.5 L1515.2 892.6 L1515.2 873.6 L1515.3 841.9 L1515.5 802.6 L1515.6 836.7 L1515.7 866.9 L1515.8 850.2 L1515.9 960.0 L1516.0 976.0 L1516.1 887.3 L1516.2 857.5 L1516.3 833.5 L1516.4 821.8 L1516.5 841.0 L1516.7 858.2 L1516.8 826.3 L1516.9 810.0 L1517.0 788.1 L1517.1 775.2 L1517.2 782.7 L1517.3 816.6 L1517.4 859.1 L1517.6 902.2 L1517.6 876.1 L1517.7 858.8 L1517.9 825.8 L1518.0 815.1 L1518.1 823.0 L1518.2 915.3 L1518.3 943.6 L1518.4 863.0 L1518.5 846.6 L1518.6 815.6 L1518.8 815.7 L1518.9 836.6 L1518.9 837.6 L1519.1 845.1 L1519.2 857.3 L1519.3 837.6 L1519.4 816.9 L1519.5 782.4 L1519.6 812.5 L1519.7 862.8 L1519.8 835.1 L1519.9 834.7 L1520.1 892.6 L1520.2 835.9 L1520.3 804.1 L1520.4 829.9 L1520.5 886.8 L1520.6 872.0 L1520.7 959.8 L1520.8 810.1 L1520.9 770.6 L1521.1 773.3 L1521.2 798.1 L1521.3 833.4 L1521.4 837.4 L1521.5 823.2 L1521.6 896.5 L1521.7 839.2 L1521.8 854.5 L1521.9 866.1 L1522.1 891.8 L1522.2 906.9 L1522.2 915.0 L1522.4 976.0 L1522.5 884.3 L1522.6 897.6 L1522.7 938.8 L1522.8 976.0 L1522.9 972.9 L1523.1 907.9 L1523.2 865.8 L1523.2 821.3 L1523.3 799.7 L1523.5 862.9 L1523.6 844.3 L1523.7 822.3 L1523.8 873.6 L1523.9 816.3 L1524.0 838.0 L1524.2 883.7 L1524.3 857.7 L1524.4 885.7 L1524.4 892.1 L1524.6 850.9 L1524.7 823.1 L1524.8 869.0 L1524.9 879.5 L1525.0 852.2 L1525.1 856.0 L1525.3 822.4 L1525.4 807.7 L1525.5 834.2 L1525.6 860.3 L1525.7 852.9 L1525.8 841.0 L1525.9 906.8 L1526.0 852.1 L1526.1 816.7 L1526.2 830.0 L1526.3 812.2 L1526.5 848.2 L1526.6 842.3 L1526.7 825.5 L1526.8 947.8 L1526.9 814.0 L1527.0 826.0 L1527.1 897.3 L1527.3 895.1 L1527.4 903.3 L1527.5 832.0 L1527.6 797.8 L1527.7 798.5 L1527.8 841.0 L1527.9 976.0 L1528.0 878.2 L1528.1 879.3 L1528.2 829.1 L1528.3 789.4 L1528.5 795.9 L1528.6 763.7 L1528.7 795.4 L1528.8 882.0 L1528.9 881.1 L1529.0 855.9 L1529.1 894.2 L1529.2 864.3 L1529.4 849.4 L1529.5 827.7 L1529.6 855.3 L1529.7 973.6 L1529.8 846.0 L1529.9 818.7 L1530.0 779.9 L1530.1 787.0 L1530.3 787.3 L1530.4 791.0 L1530.5 782.1 L1530.6 765.9 L1530.7 797.5 L1530.8 889.8 L1530.9 865.7 L1531.0 818.6 L1531.2 880.8 L1531.3 928.5 L1531.4 887.9 L1531.5 831.6 L1531.6 836.6 L1531.7 825.8 L1531.8 811.2 L1531.9 962.2 L1532.0 896.8 L1532.2 883.3 L1532.3 891.4 L1532.4 925.5 L1532.5 942.6 L1532.6 845.4 L1532.7 852.7 L1532.8 875.5 L1532.9 838.9 L1533.0 809.8 L1533.2 839.1 L1533.3 870.1 L1533.4 827.3 L1533.5 801.8 L1533.6 898.7 L1533.7 821.1 L1533.8 809.2 L1533.9 804.3 L1534.0 790.4 L1534.2 873.0 L1534.3 889.7 L1534.4 945.3 L1534.5 887.8 L1534.6 915.1 L1534.7 834.1 L1534.8 813.7 L1534.9 926.8 L1535.0 868.2 L1535.1 834.9 L1535.3 933.5 L1535.4 858.6 L1535.5 867.7 L1535.6 849.5 L1535.7 843.3 L1535.9 815.0 L1536.0 800.3 L1536.1 809.7 L1536.2 881.5 L1536.3 976.0 L1536.4 903.1 L1536.5 911.3 L1536.6 831.7 L1536.7 840.9 L1536.8 899.2 L1536.9 901.8 L1537.1 824.9 L1537.2 810.0 L1537.3 917.8 L1537.4 914.7 L1537.5 845.8 L1537.7 848.5 L1537.8 845.4 L1537.9 822.4 L1538.0 798.3 L1538.1 830.9 L1538.2 946.4 L1538.3 947.1 L1538.4 862.9 L1538.6 863.3 L1538.7 902.5 L1538.8 934.1 L1538.9 854.6 L1539.0 865.0 L1539.1 932.9 L1539.2 911.7 L1539.3 874.5 L1539.4 818.9 L1539.5 823.0 L1539.7 822.0 L1539.8 816.8 L1539.9 853.1 L1540.0 913.7 L1540.1 976.0 L1540.2 886.1 L1540.3 890.8 L1540.4 976.0 L1540.6 891.6 L1540.7 932.7 L1540.8 903.0 L1540.9 867.6 L1541.0 835.2 L1541.1 786.0 L1541.2 816.2 L1541.4 904.7 L1541.5 812.2 L1541.6 796.7 L1541.7 870.3 L1541.8 976.0 L1541.9 877.8 L1542.0 872.0 L1542.2 831.3 L1542.3 866.4 L1542.4 883.7 L1542.5 884.1 L1542.6 869.3 L1542.7 856.5 L1542.8 827.5 L1542.9 893.8 L1543.1 909.1 L1543.2 799.8 L1543.3 800.0 L1543.4 869.5 L1543.5 859.5 L1543.6 811.3 L1543.7 821.5 L1543.9 962.3 L1544.0 967.5 L1544.1 854.6 L1544.2 873.8 L1544.3 940.7 L1544.4 839.8 L1544.6 808.4 L1544.7 843.6 L1544.8 874.7 L1544.9 961.7 L1545.0 864.3 L1545.1 864.0 L1545.3 812.2 L1545.4 821.4 L1545.5 829.9 L1545.6 879.7 L1545.7 822.6 L1545.8 976.0 L1545.9 804.0 L1546.0 798.3 L1546.1 883.0 L1546.2 908.4 L1546.4 874.2 L1546.5 881.3 L1546.6 788.6 L1546.7 802.7 L1546.8 863.2 L1547.0 976.0 L1547.1 908.4 L1547.2 853.4 L1547.3 860.9 L1547.4 919.0 L1547.5 820.2 L1547.6 789.1 L1547.7 814.4 L1547.8 935.1 L1548.0 976.0 L1548.1 911.4 L1548.2 901.0 L1548.3 849.3 L1548.4 839.8 L1548.6 844.9 L1548.7 793.9 L1548.8 813.2 L1548.9 964.9 L1549.0 939.7 L1549.1 916.0 L1549.2 852.8 L1549.3 976.0 L1549.5 889.9 L1549.6 976.0 L1549.7 976.0 L1549.8 953.0 L1549.9 887.2 L1550.0 797.4 L1550.2 816.3 L1550.3 890.7 L1550.4 976.0 L1550.5 836.0 L1550.6 836.7 L1550.7 859.4 L1550.9 877.9 L1551.0 803.3 L1551.1 789.3 L1551.2 812.7 L1551.3 838.9 L1551.4 862.7 L1551.5 846.4 L1551.7 899.4 L1551.8 912.8 L1551.9 943.9 L1552.0 789.7 L1552.1 807.1 L1552.2 860.3 L1552.3 806.7 L1552.5 863.8 L1552.6 873.3 L1552.7 976.0 L1552.8 902.1 L1552.9 887.3 L1553.0 871.0 L1553.1 964.1 L1553.3 838.3 L1553.4 938.1 L1553.5 814.4 L1553.6 822.8 L1553.7 976.0 L1553.8 858.1 L1553.9 847.7 L1554.1 898.4 L1554.2 906.3 L1554.3 840.5 L1554.4 860.4 L1554.5 905.8 L1554.6 931.1 L1554.8 886.9 L1554.9 931.4 L1555.0 945.4 L1555.1 908.0 L1555.2 976.0 L1555.3 913.6 L1555.5 875.4 L1555.6 876.7 L1555.7 900.2 L1555.8 829.2 L1555.9 881.1 L1556.0 910.1 L1556.2 853.4 L1556.3 825.9 L1556.4 853.2 L1556.5 889.8 L1556.6 959.7 L1556.7 853.0 L1556.9 867.6 L1557.0 898.9 L1557.1 896.7 L1557.2 884.0 L1557.3 900.6 L1557.4 842.5 L1557.6 873.5 L1557.7 901.7 L1557.8 840.9 L1557.9 832.1 L1558.0 849.8 L1558.1 817.4 L1558.2 852.8 L1558.3 940.4 L1558.5 848.7 L1558.6 838.9 L1558.7 783.2 L1558.8 843.6 L1558.9 908.1 L1559.1 910.3 L1559.2 876.0 L1559.3 828.3 L1559.4 830.4 L1559.5 810.7 L1559.7 976.0 L1559.7 976.0 L1559.8 895.6 L1560.0 825.3 L1560.1 806.1 L1560.2 886.2 L1560.3 838.5 L1560.5 879.4 L1560.6 885.2 L1560.7 824.5 L1560.8 780.8 L1560.9 802.6 L1561.1 836.8 L1561.2 946.2 L1561.2 876.3 L1561.4 884.3 L1561.5 822.8 L1561.6 832.3 L1561.7 861.8 L1561.9 805.5 L1562.0 779.1 L1562.1 792.3 L1562.2 951.1 L1562.3 812.5 L1562.5 802.4 L1562.5 875.3 L1562.7 836.3 L1562.8 824.9 L1562.9 846.5 L1563.0 858.9 L1563.1 869.4 L1563.3 871.6 L1563.4 859.4 L1563.5 970.3 L1563.6 863.9 L1563.7 957.7 L1563.8 796.2 L1564.0 787.7 L1564.1 857.5 L1564.2 926.8 L1564.3 863.8 L1564.4 878.3 L1564.5 893.4 L1564.6 852.1 L1564.8 783.5 L1564.9 880.6 L1565.0 782.6 L1565.1 819.2 L1565.3 811.7 L1565.4 862.6 L1565.5 866.2 L1565.6 961.7 L1565.7 913.8 L1565.8 869.7 L1566.0 803.6 L1566.1 878.3 L1566.2 808.7 L1566.3 807.5 L1566.4 803.9 L1566.5 801.4 L1566.7 786.7 L1566.8 802.4 L1566.9 845.4 L1567.0 846.8 L1567.1 869.2 L1567.2 857.7 L1567.4 902.3 L1567.5 871.6 L1567.6 817.7 L1567.7 804.1 L1567.8 784.7 L1567.9 809.5 L1568.1 875.6 L1568.2 882.3 L1568.3 859.3 L1568.4 819.2 L1568.5 881.5 L1568.7 818.8 L1568.8 827.6 L1568.9 819.9 L1569.0 853.9 L1569.1 769.7 L1569.2 796.5 L1569.4 909.8 L1569.5 829.1 L1569.6 859.9 L1569.7 799.3 L1569.8 794.3 L1570.0 826.3 L1570.1 840.9 L1570.2 917.1 L1570.3 874.5 L1570.4 818.9 L1570.6 976.0 L1570.7 967.0 L1570.8 842.7 L1570.9 895.2 L1571.0 903.6 L1571.1 945.8 L1571.3 921.4 L1571.4 900.2 L1571.5 800.6 L1571.6 790.0 L1571.7 834.2 L1571.9 912.1 L1572.0 933.4 L1572.1 904.0 L1572.2 899.2 L1572.3 936.5 L1572.5 834.2 L1572.6 810.0 L1572.7 831.2 L1572.8 855.4 L1572.9 839.0 L1573.0 900.1 L1573.2 976.0 L1573.3 926.3 L1573.4 839.8 L1573.5 922.2 L1573.6 821.0 L1573.8 813.4 L1573.9 819.4 L1574.0 903.3 L1574.1 931.0 L1574.2 875.4 L1574.4 848.8 L1574.5 821.7 L1574.6 854.0 L1574.7 804.1 L1574.8 795.2 L1574.9 850.0 L1575.1 842.3 L1575.2 826.3 L1575.3 825.5 L1575.4 934.0 L1575.5 862.5 L1575.7 878.8 L1575.8 879.3 L1575.9 843.1 L1576.0 879.0 L1576.2 818.8 L1576.3 804.1 L1576.4 805.1 L1576.5 830.6 L1576.6 830.5 L1576.7 859.9 L1576.9 948.7 L1577.0 925.7 L1577.1 970.3 L1577.2 839.9 L1577.3 849.7 L1577.5 921.0 L1577.6 811.6 L1577.7 904.4 L1577.8 812.6 L1577.9 808.8 L1578.1 936.7 L1578.2 885.3 L1578.3 833.9 L1578.4 844.4 L1578.5 824.1 L1578.7 806.7 L1578.8 840.7 L1578.9 895.2 L1579.0 840.9 L1579.1 836.4 L1579.3 851.5 L1579.4 837.2 L1579.5 770.6 L1579.6 809.6 L1579.8 817.4 L1579.8 800.1 L1580.0 766.3 L1580.1 939.1 L1580.2 817.6 L1580.3 811.6 L1580.5 867.6 L1580.6 863.3 L1580.7 848.3 L1580.8 877.1 L1580.9 797.4 L1581.1 848.5 L1581.2 826.5 L1581.3 895.8 L1581.4 819.7 L1581.6 827.5 L1581.6 871.4 L1581.8 851.7 L1581.9 878.5 L1582.0 843.1 L1582.2 935.2 L1582.2 870.5 L1582.4 872.8 L1582.5 976.0 L1582.6 830.0 L1582.7 887.3 L1582.9 903.7 L1583.0 976.0 L1583.1 842.5 L1583.2 880.9 L1583.3 976.0 L1583.5 905.6 L1583.6 976.0 L1583.7 894.6 L1583.9 923.7 L1583.9 848.3 L1584.1 905.3 L1584.2 867.2 L1584.3 845.8 L1584.5 843.8 L1584.5 814.5 L1584.7 863.4 L1584.8 829.3 L1584.9 863.2 L1585.1 896.9 L1585.1 841.9 L1585.3 821.8 L1585.4 814.8 L1585.5 863.0 L1585.7 853.2 L1585.8 883.7 L1585.9 892.5 L1586.0 868.0 L1586.1 888.7 L1586.3 955.9 L1586.4 875.2 L1586.5 943.4 L1586.6 957.5 L1586.7 953.4 L1586.8 938.1 L1587.0 934.3 L1587.1 854.9 L1587.2 820.6 L1587.4 864.0 L1587.5 803.5 L1587.6 829.1 L1587.7 889.8 L1587.8 915.2 L1587.9 952.6 L1588.1 864.0 L1588.2 901.7 L1588.3 819.5 L1588.5 842.5 L1588.6 976.0 L1588.7 880.6 L1588.8 832.2 L1588.9 821.0 L1589.0 895.7 L1589.2 848.7 L1589.3 976.0 L1589.4 890.2 L1589.5 844.3 L1589.7 970.4 L1589.8 869.7 L1589.9 891.6 L1590.0 943.7 L1590.1 820.4 L1590.3 956.2 L1590.4 838.4 L1590.5 899.3 L1590.6 844.9 L1590.8 817.7 L1590.9 907.6 L1591.0 847.0 L1591.1 893.4 L1591.3 872.6 L1591.4 840.6 L1591.5 796.8 L1591.6 837.7 L1591.7 852.5 L1591.8 784.7 L1592.0 859.3 L1592.1 924.2 L1592.2 972.2 L1592.3 815.0 L1592.5 888.9 L1592.6 910.3 L1592.7 976.0 L1592.8 838.6 L1593.0 889.6 L1593.1 796.5 L1593.2 814.2 L1593.3 960.0 L1593.5 973.3 L1593.6 851.7 L1593.7 846.2 L1593.8 918.3 L1593.9 918.6 L1594.1 772.8 L1594.2 921.1 L1594.3 976.0 L1594.4 922.6 L1594.6 825.9 L1594.7 916.8 L1594.8 880.0 L1594.9 845.3 L1595.0 842.2 L1595.2 952.2 L1595.3 909.4 L1595.4 862.8 L1595.5 916.2 L1595.7 935.4 L1595.8 879.3 L1595.9 914.2 L1596.0 844.3 L1596.1 868.0 L1596.3 807.1 L1596.4 850.1 L1596.5 901.5 L1596.6 819.8 L1596.8 827.2 L1596.9 821.8 L1597.0 877.1 L1597.2 852.1 L1597.3 846.3 L1597.4 923.2 L1597.5 857.2 L1597.6 913.7 L1597.8 895.2 L1597.9 882.8 L1598.0 929.6 L1598.1 815.4 L1598.2 806.5 L1598.4 976.0 L1598.5 792.2 L1598.6 903.7 L1598.7 855.1 L1598.9 878.1 L1599.0 921.5 L1599.1 802.2 L1599.2 880.9 L1599.4 909.3 L1599.5 824.1 L1599.6 837.5 L1599.7 864.5 L1599.8 976.0 L1600.0 857.7 L1600.1 847.1 L1600.2 878.0 L1600.4 904.5 L1600.5 819.4 L1600.6 929.0 L1600.7 862.7 L1600.8 872.1 L1601.0 908.4 L1601.1 859.9 L1601.2 929.7 L1601.4 836.6 L1601.5 849.6 L1601.6 849.1 L1601.7 885.2 L1601.8 902.2 L1602.0 839.3 L1602.1 821.4 L1602.2 976.0 L1602.3 918.0 L1602.5 863.8 L1602.6 933.8 L1602.7 848.6 L1602.8 809.7 L1603.0 932.6 L1603.1 976.0 L1603.2 826.0 L1603.3 830.7 L1603.5 880.7 L1603.6 814.3 L1603.7 839.7 L1603.8 926.7 L1603.9 800.8 L1604.1 876.3 L1604.2 885.1 L1604.3 904.7 L1604.5 907.6 L1604.6 826.1 L1604.7 951.2 L1604.8 924.7 L1605.0 899.8 L1605.1 822.7 L1605.2 942.5 L1605.3 959.4 L1605.5 794.2 L1605.6 785.2 L1605.7 842.5 L1605.8 899.8 L1606.0 854.1 L1606.1 914.1 L1606.2 893.2 L1606.4 830.1 L1606.5 856.5 L1606.6 852.3 L1606.7 958.8 L1606.9 838.1 L1607.0 886.5 L1607.1 821.2 L1607.2 898.3 L1607.4 889.5 L1607.5 959.5 L1607.6 976.0 L1607.7 867.1 L1607.9 829.8 L1608.0 845.0 L1608.1 976.0 L1608.2 862.6 L1608.3 827.6 L1608.5 783.4 L1608.6 803.1 L1608.7 803.7 L1608.8 956.7 L1609.0 845.0 L1609.1 792.3 L1609.2 798.8 L1609.3 844.3 L1609.5 890.7 L1609.6 813.6 L1609.7 824.3 L1609.9 974.8 L1610.0 811.9 L1610.1 959.5 L1610.2 910.9 L1610.4 976.0 L1610.5 941.3 L1610.6 825.9 L1610.7 818.8 L1610.9 826.8 L1611.0 855.8 L1611.1 976.0 L1611.2 909.2 L1611.4 854.5 L1611.5 816.2 L1611.6 836.9 L1611.8 876.6 L1611.9 828.4 L1612.0 886.7 L1612.1 837.2 L1612.2 838.6 L1612.4 830.5 L1612.5 870.9 L1612.6 820.4 L1612.8 804.1 L1612.9 835.9 L1613.0 861.7 L1613.1 889.4 L1613.3 807.2 L1613.4 824.0 L1613.5 902.7 L1613.6 926.2 L1613.8 912.4 L1613.9 907.5 L1614.0 793.6 L1614.1 861.5 L1614.3 834.8 L1614.4 856.1 L1614.5 851.0 L1614.7 910.1 L1614.8 899.6 L1614.9 976.0 L1615.0 913.5 L1615.2 860.0 L1615.3 820.2 L1615.4 914.6 L1615.6 931.6 L1615.7 873.6 L1615.8 790.4 L1615.9 976.0 L1616.1 976.0 L1616.2 827.4 L1616.3 874.6 L1616.4 868.8 L1616.6 833.9 L1616.7 820.2 L1616.8 872.2 L1616.9 850.7 L1617.1 824.3 L1617.2 856.6 L1617.3 869.9 L1617.5 867.8 L1617.6 874.6 L1617.7 810.2 L1617.8 823.4 L1618.0 818.3 L1618.1 849.8 L1618.2 844.1 L1618.3 976.0 L1618.5 846.2 L1618.6 862.0 L1618.7 976.0 L1618.8 806.5 L1619.0 917.5 L1619.1 976.0 L1619.2 821.2 L1619.4 781.5 L1619.5 814.0 L1619.6 901.8 L1619.7 937.5 L1619.9 784.6 L1620.0 883.8 L1620.1 808.0 L1620.3 862.9 L1620.4 869.4 L1620.5 936.9 L1620.6 960.4 L1620.8 837.6 L1620.9 942.0 L1621.0 889.8 L1621.2 873.3 L1621.3 888.0 L1621.4 847.1 L1621.5 886.5 L1621.7 893.6 L1621.8 895.6 L1621.9 922.8 L1622.1 798.0 L1622.2 878.3 L1622.3 971.5 L1622.4 894.1 L1622.6 964.5 L1622.7 840.9 L1622.8 893.2 L1623.0 816.8 L1623.1 812.9 L1623.2 857.1 L1623.4 941.7 L1623.5 907.7 L1623.6 855.4 L1623.8 867.1 L1623.9 795.2 L1624.0 865.9 L1624.1 816.4 L1624.2 809.0 L1624.4 809.2 L1624.5 813.5 L1624.6 825.8 L1624.8 842.4 L1624.9 850.8 L1625.0 882.8 L1625.2 856.4 L1625.3 838.2 L1625.4 823.1 L1625.5 805.3 L1625.7 841.1 L1625.8 887.2 L1625.9 969.2 L1626.1 857.6 L1626.2 869.5 L1626.3 845.8 L1626.5 959.7 L1626.6 928.0 L1626.7 908.8 L1626.8 872.1 L1627.0 822.9 L1627.1 777.4 L1627.2 839.6 L1627.4 976.0 L1627.5 904.8 L1627.6 936.8 L1627.7 974.1 L1627.9 878.0 L1628.0 844.9 L1628.1 861.4 L1628.3 844.4 L1628.4 855.1 L1628.5 819.8 L1628.6 818.2 L1628.8 934.1 L1628.9 863.4 L1629.0 867.2 L1629.2 848.8 L1629.3 869.3 L1629.4 829.3 L1629.6 934.0 L1629.7 870.8 L1629.8 941.4 L1630.0 976.0 L1630.1 908.2 L1630.2 895.3 L1630.3 961.1 L1630.5 976.0 L1630.6 855.6 L1630.7 854.5 L1630.9 976.0 L1631.0 968.6 L1631.1 840.7 L1631.3 956.7 L1631.4 890.9 L1631.5 876.9 L1631.6 815.2 L1631.8 827.3 L1631.9 808.2 L1632.0 869.5 L1632.2 902.4 L1632.3 860.0 L1632.4 784.5 L1632.5 850.5 L1632.7 814.6 L1632.8 798.0 L1633.0 854.7 L1633.1 839.4 L1633.2 806.9 L1633.4 881.6 L1633.5 866.5 L1633.6 930.7 L1633.7 912.1 L1633.9 949.0 L1634.0 806.0 L1634.1 863.4 L1634.3 908.0 L1634.4 824.9 L1634.5 900.2 L1634.7 926.0 L1634.8 899.4 L1634.9 880.9 L1635.0 925.9 L1635.2 894.7 L1635.3 858.5 L1635.4 959.7 L1635.6 851.6 L1635.7 802.7 L1635.8 849.7 L1636.0 831.1 L1636.1 928.1 L1636.2 938.8 L1636.4 764.4 L1636.5 833.0 L1636.6 807.1 L1636.8 795.9 L1636.9 896.7 L1637.0 908.3 L1637.2 873.7 L1637.3 929.9 L1637.4 827.0 L1637.5 844.2 L1637.7 868.8 L1637.8 794.5 L1637.9 855.8 L1638.1 845.2 L1638.2 800.1 L1638.3 949.8 L1638.5 859.5 L1638.6 815.1 L1638.7 945.3 L1638.9 861.5 L1639.0 782.4 L1639.1 792.4 L1639.3 857.0 L1639.4 886.5 L1639.5 882.6 L1639.7 813.7 L1639.8 838.7 L1639.9 827.8 L1640.1 901.4 L1640.2 861.7 L1640.3 900.8 L1640.5 800.0 L1640.6 818.1 L1640.7 902.7 L1640.8 903.2 L1641.0 965.5 L1641.1 790.4 L1641.3 815.8 L1641.4 815.2 L1641.5 824.5 L1641.7 816.7 L1641.8 871.8 L1641.9 940.0 L1642.0 812.0 L1642.2 821.4 L1642.3 932.2 L1642.4 825.9 L1642.6 924.7 L1642.7 834.1 L1642.9 916.8 L1643.0 861.4 L1643.1 862.2 L1643.2 871.5 L1643.4 922.7 L1643.5 955.4 L1643.7 875.5 L1643.8 810.4 L1643.9 823.6 L1644.0 837.8 L1644.2 798.5 L1644.3 923.8 L1644.5 891.0 L1644.6 787.4 L1644.7 847.4 L1644.8 791.6 L1645.0 811.0 L1645.1 838.0 L1645.3 793.3 L1645.4 814.7 L1645.5 976.0 L1645.6 802.1 L1645.8 863.6 L1645.9 969.8 L1646.1 881.0 L1646.2 867.3 L1646.3 841.6 L1646.5 949.9 L1646.6 856.4 L1646.7 795.2 L1646.8 763.9 L1647.0 886.3 L1647.1 844.3 L1647.3 849.5 L1647.4 842.4 L1647.5 808.8 L1647.7 833.5 L1647.8 916.7 L1647.9 842.5 L1648.1 875.5 L1648.2 824.9 L1648.3 785.9 L1648.5 881.4 L1648.6 801.6 L1648.7 859.0 L1648.9 803.6 L1649.0 871.8 L1649.1 815.5 L1649.3 854.5 L1649.4 898.9 L1649.5 763.1 L1649.7 849.0 L1649.8 874.1 L1649.9 875.1 L1650.1 856.3 L1650.2 976.0 L1650.3 831.5 L1650.5 801.0 L1650.6 847.6 L1650.8 879.2 L1650.9 837.8 L1651.0 880.7 L1651.2 787.1 L1651.3 847.8 L1651.4 776.5 L1651.6 976.0 L1651.7 903.2 L1651.8 859.9 L1652.0 945.5 L1652.1 814.7 L1652.2 821.2 L1652.4 866.2 L1652.5 925.6 L1652.6 800.2 L1652.8 887.7 L1652.9 976.0 L1653.1 776.1 L1653.2 794.1 L1653.3 912.1 L1653.5 848.0 L1653.6 852.0 L1653.7 887.9 L1653.9 920.1 L1654.0 852.6 L1654.1 850.4 L1654.3 884.9 L1654.4 777.1 L1654.6 834.1 L1654.7 962.6 L1654.8 897.1 L1655.0 793.8 L1655.1 918.7 L1655.2 796.5 L1655.3 921.6 L1655.5 806.0 L1655.6 821.7 L1655.8 777.1 L1655.9 840.3 L1656.0 844.5 L1656.2 800.7 L1656.3 803.0 L1656.4 862.6 L1656.6 806.6 L1656.7 884.0 L1656.9 757.4 L1657.0 860.8 L1657.1 917.8 L1657.3 937.4 L1657.4 818.7 L1657.5 928.0 L1657.7 770.5 L1657.8 898.7 L1657.9 862.6 L1658.1 793.7 L1658.2 822.6 L1658.3 767.1 L1658.5 954.5 L1658.6 840.9 L1658.8 807.7 L1658.9 740.6 L1659.0 865.5 L1659.2 812.7 L1659.3 840.9 L1659.5 842.8 L1659.6 909.1 L1659.7 826.3 L1659.9 940.1 L1660.0 883.7 L1660.1 809.2 L1660.3 797.2 L1660.4 865.3 L1660.5 976.0 L1660.7 822.9 L1660.8 928.1 L1661.0 860.7 L1661.1 765.0 L1661.2 798.7 L1661.4 848.1 L1661.5 805.3 L1661.6 787.5 L1661.8 810.9 L1661.9 877.6 L1662.0 828.3 L1662.2 915.5 L1662.3 913.1 L1662.5 863.7 L1662.6 805.0 L1662.7 777.1 L1662.9 869.0 L1663.0 824.3 L1663.2 909.3 L1663.3 861.5 L1663.4 791.5 L1663.6 871.1 L1663.7 855.8 L1663.9 970.8 L1664.0 911.3 L1664.1 763.5 L1664.3 976.0 L1664.4 908.4 L1664.5 914.5 L1664.7 781.3 L1664.8 768.5 L1665.0 788.6 L1665.1 811.9 L1665.2 892.8 L1665.4 972.6 L1665.5 955.0 L1665.6 785.5 L1665.8 881.1 L1665.9 930.6 L1666.1 976.0 L1666.2 856.3 L1666.3 809.9 L1666.5 888.5 L1666.6 830.2 L1666.8 769.8 L1666.9 802.2 L1667.0 968.8 L1667.2 915.5 L1667.3 784.4 L1667.4 853.0 L1667.6 791.0 L1667.7 837.7 L1667.9 777.4 L1668.0 933.3 L1668.1 773.9 L1668.3 969.4 L1668.4 896.4 L1668.6 766.2 L1668.7 735.3 L1668.8 899.3 L1669.0 915.5 L1669.1 806.1 L1669.3 838.7 L1669.4 771.3 L1669.5 809.9 L1669.7 819.7 L1669.8 771.7 L1669.9 845.0 L1670.1 840.4 L1670.2 780.1 L1670.4 976.0 L1670.5 776.9 L1670.6 863.4 L1670.8 973.7 L1670.9 780.5 L1671.1 922.2 L1671.2 828.1 L1671.3 791.8 L1671.5 887.7 L1671.6 814.3 L1671.8 921.4 L1671.9 873.6 L1672.0 976.0 L1672.2 754.9 L1672.3 755.4 L1672.5 967.6 L1672.6 874.3 L1672.7 965.0 L1672.9 903.0 L1673.0 819.9 L1673.2 925.9 L1673.3 742.5 L1673.5 976.0 L1673.6 909.2 L1673.7 788.2 L1673.9 703.3 L1674.0 767.8 L1674.2 809.2 L1674.3 808.0 L1674.4 804.6 L1674.6 701.8 L1674.7 780.7 L1674.9 691.3 L1675.0 879.9 L1675.1 877.0 L1675.3 748.0 L1675.4 728.3 L1675.6 728.6 L1675.7 728.9 L1675.9 793.9 L1676.0 821.3 L1676.1 723.0 L1676.2 706.7 L1676.2 692.7 L1676.2 699.2 L1676.3 554.5 L1676.3 371.3 L1676.3 310.2 L1676.3 371.3 L1676.4 554.5 L1676.4 789.7 L1676.4 914.4 L1676.5 967.1 L1676.5 943.4 L1676.5 930.7 L1676.6 952.7 L1676.7 748.9 L1676.8 722.3 L1677.0 733.6 L1677.1 952.3 L1677.2 878.0 L1677.4 758.3 L1677.5 724.6 L1677.7 918.9 L1677.8 767.5 L1678.0 842.7 L1678.1 705.8 L1678.3 770.6 L1678.4 802.3 L1678.5 836.5 L1678.7 922.2 L1678.8 770.2 L1679.0 817.7 L1679.1 945.7 L1679.2 775.0 L1679.4 909.6 L1679.5 976.0 L1679.7 878.3 L1679.8 775.4 L1679.9 815.9 L1680.1 748.0 L1680.2 932.3 L1680.4 833.2 L1680.5 786.0 L1680.7 762.7 L1680.8 976.0 L1680.9 771.9 L1681.1 957.5 L1681.2 784.8 L1681.4 877.7 L1681.5 785.5 L1681.7 820.5 L1681.8 800.1 L1681.9 845.5 L1682.1 806.6 L1682.2 975.6 L1682.4 910.0 L1682.5 866.9 L1682.7 924.0 L1682.8 911.7 L1683.0 923.5 L1683.1 870.2 L1683.2 884.2 L1683.4 787.1 L1683.5 744.9 L1683.7 778.5 L1683.8 783.8 L1684.0 830.1 L1684.1 879.4 L1684.2 906.2 L1684.4 974.6 L1684.5 787.8 L1684.7 886.3 L1684.8 857.9 L1685.0 901.9 L1685.1 940.8 L1685.2 807.4 L1685.4 853.7 L1685.5 845.4 L1685.7 816.5 L1685.8 900.6 L1685.9 835.3 L1686.1 852.1 L1686.2 886.9 L1686.4 832.5 L1686.5 890.8 L1686.7 768.1 L1686.8 843.9 L1687.0 790.9 L1687.1 873.7 L1687.2 811.1 L1687.4 910.9 L1687.5 767.0 L1687.7 837.7 L1687.8 814.2 L1688.0 933.7 L1688.1 907.5 L1688.2 825.5 L1688.4 803.1 L1688.6 851.9 L1688.7 916.8 L1688.8 811.1 L1689.0 882.6 L1689.1 854.9 L1689.3 815.7 L1689.4 826.4 L1689.6 812.2 L1689.7 826.3 L1689.8 840.0 L1690.0 976.0 L1690.1 976.0 L1690.3 976.0 L1690.4 903.7 L1690.6 976.0 L1690.7 861.0 L1690.9 893.0 L1691.0 846.8 L1691.2 868.7 L1691.3 794.4 L1691.4 864.0 L1691.6 875.3 L1691.7 833.3 L1691.9 862.2 L1692.0 861.0 L1692.2 946.7 L1692.3 906.4 L1692.4 888.3 L1692.6 815.6 L1692.8 817.0 L1692.9 804.3 L1693.1 871.7 L1693.2 975.9 L1693.3 824.2 L1693.5 868.3 L1693.6 830.6 L1693.8 883.1 L1693.9 826.3 L1694.1 855.8 L1694.2 946.6 L1694.4 833.5 L1694.5 887.2 L1694.7 782.9 L1694.8 797.9 L1694.9 912.4 L1695.1 923.7 L1695.2 898.1 L1695.4 795.9 L1695.5 796.5 L1695.7 857.2 L1695.8 871.9 L1696.0 908.0 L1696.1 840.6 L1696.2 883.6 L1696.4 929.8 L1696.5 837.0 L1696.7 879.4 L1696.8 881.2 L1697.0 828.2 L1697.1 871.7 L1697.3 808.0 L1697.4 879.1 L1697.6 864.9 L1697.7 932.2 L1697.9 823.1 L1698.0 825.5 L1698.2 892.0 L1698.3 857.4 L1698.5 840.0 L1698.6 907.3 L1698.8 917.4 L1698.9 834.4 L1699.0 866.0 L1699.2 824.0 L1699.3 885.0 L1699.5 773.9 L1699.6 920.0 L1699.8 802.3 L1699.9 877.9 L1700.1 902.0 L1700.2 869.1 L1700.4 802.7 L1700.5 869.2 L1700.7 818.7 L1700.8 851.5 L1701.0 884.9 L1701.1 868.0 L1701.3 829.3 L1701.4 859.4 L1701.5 815.1 L1701.7 819.7 L1701.9 831.8 L1702.0 870.4 L1702.1 945.7 L1702.3 877.4 L1702.4 848.8 L1702.6 945.6 L1702.7 929.4 L1702.9 897.5 L1703.0 976.0 L1703.2 858.2 L1703.3 795.6 L1703.5 837.5 L1703.6 813.1 L1703.8 902.0 L1703.9 976.0 L1704.1 898.1 L1704.2 899.5 L1704.4 955.9 L1704.5 828.0 L1704.7 924.7 L1704.8 976.0 L1705.0 789.8 L1705.1 906.2 L1705.3 894.7 L1705.4 911.5 L1705.6 837.2 L1705.7 821.0 L1705.9 843.6 L1706.0 812.3 L1706.2 962.8 L1706.3 907.9 L1706.5 923.4 L1706.6 813.8 L1706.8 895.4 L1706.9 837.8 L1707.1 912.4 L1707.2 855.7 L1707.4 976.0 L1707.5 871.4 L1707.7 860.8 L1707.8 822.9 L1707.9 838.8 L1708.1 822.5 L1708.2 829.9 L1708.4 862.9 L1708.6 820.5 L1708.7 862.8 L1708.9 892.7 L1709.0 882.5 L1709.2 848.2 L1709.3 824.8 L1709.5 916.7 L1709.6 945.8 L1709.8 962.9 L1709.9 897.7 L1710.1 872.2 L1710.2 787.1 L1710.4 893.1 L1710.5 850.6 L1710.7 831.6 L1710.8 865.2 L1711.0 849.7 L1711.1 800.3 L1711.3 840.1 L1711.4 843.4 L1711.6 846.2 L1711.7 899.7 L1711.9 893.8 L1712.0 859.6 L1712.2 921.4 L1712.3 883.6 L1712.5 857.6 L1712.6 836.0 L1712.8 841.1 L1712.9 946.1 L1713.1 809.5 L1713.2 889.9 L1713.4 875.1 L1713.5 870.0 L1713.7 829.7 L1713.8 976.0 L1714.0 907.2 L1714.1 933.2 L1714.3 976.0 L1714.4 931.6 L1714.6 849.9 L1714.7 856.2 L1714.9 848.7 L1715.0 865.7 L1715.2 792.7 L1715.3 895.7 L1715.5 830.8 L1715.6 826.0 L1715.8 828.4 L1716.0 862.1 L1716.1 956.5 L1716.2 857.9 L1716.4 854.7 L1716.6 854.1 L1716.7 909.9 L1716.9 848.4 L1717.0 827.8 L1717.2 811.5 L1717.3 891.3 L1717.5 976.0 L1717.6 896.9 L1717.8 875.6 L1717.9 927.3 L1718.1 968.1 L1718.2 856.7 L1718.4 883.3 L1718.5 826.7 L1718.7 801.8 L1718.9 834.7 L1719.0 803.2 L1719.2 829.1 L1719.3 916.3 L1719.5 931.5 L1719.6 933.8 L1719.8 877.0 L1719.9 907.2 L1720.1 817.7 L1720.2 850.5 L1720.4 958.0 L1720.5 937.2 L1720.7 789.2 L1720.9 818.4 L1721.0 928.8 L1721.2 811.1 L1721.3 931.7 L1721.5 869.1 L1721.6 938.1 L1721.8 860.7 L1721.9 800.3 L1722.1 976.0 L1722.2 783.6 L1722.4 774.4 L1722.5 846.7 L1722.7 795.2 L1722.8 852.5 L1723.0 837.5 L1723.2 905.5 L1723.3 848.5 L1723.5 836.2 L1723.6 932.2 L1723.8 839.4 L1723.9 895.3 L1724.1 827.7 L1724.2 875.3 L1724.4 944.0 L1724.5 824.8 L1724.7 785.6 L1724.8 894.8 L1725.0 811.6 L1725.2 914.2 L1725.3 865.5 L1725.5 814.7 L1725.6 828.9 L1725.8 940.9 L1725.9 877.6 L1726.1 860.2 L1726.3 870.9 L1726.4 819.0 L1726.6 833.8 L1726.7 834.8 L1726.9 885.3 L1727.0 843.7 L1727.2 875.8 L1727.3 923.7 L1727.5 877.7 L1727.6 827.1 L1727.8 834.3 L1728.0 853.5 L1728.1 907.9 L1728.3 840.5 L1728.4 837.4 L1728.6 855.9 L1728.7 835.4 L1728.9 901.4 L1729.1 839.4 L1729.2 827.5 L1729.4 838.5 L1729.5 845.7 L1729.7 901.8 L1729.8 912.6 L1730.0 837.0 L1730.1 837.9 L1730.3 854.2 L1730.5 886.9 L1730.6 894.9 L1730.8 842.0 L1730.9 895.1 L1731.1 768.5 L1731.3 800.8 L1731.4 853.3 L1731.6 862.2 L1731.7 839.2 L1731.9 976.0 L1732.0 865.6 L1732.2 852.2 L1732.3 844.0 L1732.5 837.5 L1732.7 847.2 L1732.8 842.4 L1733.0 838.8 L1733.1 838.9 L1733.3 792.8 L1733.4 820.9 L1733.6 803.4 L1733.8 879.4 L1733.9 877.8 L1734.1 790.7 L1734.2 826.1 L1734.4 859.9 L1734.6 905.3 L1734.7 884.1 L1734.9 836.3 L1735.0 918.3 L1735.2 859.4 L1735.3 832.6 L1735.5 823.9 L1735.7 856.5 L1735.8 865.8 L1736.0 910.1 L1736.1 947.7 L1736.3 871.2 L1736.4 877.6 L1736.6 882.9 L1736.8 843.9 L1736.9 861.1 L1737.1 850.1 L1737.2 976.0 L1737.4 869.6 L1737.6 912.9 L1737.7 926.1 L1737.9 817.9 L1738.0 852.9 L1738.2 826.3 L1738.3 899.2 L1738.5 793.3 L1738.7 796.2 L1738.8 822.2 L1739.0 873.6 L1739.1 854.5 L1739.3 835.2 L1739.5 842.4 L1739.6 857.1 L1739.8 932.4 L1739.9 843.3 L1740.1 770.4 L1740.3 910.1 L1740.4 827.1 L1740.6 932.0 L1740.7 976.0 L1740.9 884.5 L1741.1 968.2 L1741.2 924.8 L1741.4 865.9 L1741.5 810.2 L1741.7 818.4 L1741.9 899.2 L1742.0 828.8 L1742.2 884.0 L1742.3 835.7 L1742.5 874.9 L1742.7 949.4 L1742.8 838.2 L1743.0 946.1 L1743.1 842.1 L1743.3 840.7 L1743.5 835.9 L1743.6 821.8 L1743.8 838.9 L1744.0 870.7 L1744.1 831.5 L1744.3 842.1 L1744.4 905.3 L1744.6 805.9 L1744.8 887.2 L1744.9 843.5 L1745.1 837.7 L1745.2 881.3 L1745.4 847.6 L1745.6 865.8 L1745.7 836.7 L1745.9 829.3 L1746.1 864.2 L1746.2 791.9 L1746.4 843.8 L1746.5 827.3 L1746.7 931.2 L1746.9 936.4 L1747.0 807.4 L1747.2 794.9 L1747.3 880.7 L1747.5 856.4 L1747.7 844.6 L1747.8 886.1 L1748.0 806.7 L1748.1 870.4 L1748.3 845.7 L1748.5 817.8 L1748.6 871.5 L1748.8 861.5 L1749.0 976.0 L1749.1 890.3 L1749.3 902.5 L1749.5 960.0 L1749.6 959.4 L1749.8 976.0 L1749.9 836.6 L1750.1 904.8 L1750.3 895.3 L1750.4 807.0 L1750.6 818.6 L1750.8 890.9 L1750.9 872.7 L1751.1 877.3 L1751.2 940.6 L1751.4 811.9 L1751.6 869.7 L1751.7 834.1 L1751.9 847.8 L1752.1 868.1 L1752.2 892.0 L1752.4 823.4 L1752.6 877.9 L1752.7 879.1 L1752.9 846.3 L1753.0 976.0 L1753.2 847.3 L1753.4 838.2 L1753.5 847.7 L1753.7 819.3 L1753.9 829.5 L1754.0 825.8 L1754.2 883.0 L1754.4 865.3 L1754.5 884.9 L1754.7 845.8 L1754.9 976.0 L1755.0 890.9 L1755.2 853.3 L1755.3 923.9 L1755.5 841.5 L1755.7 965.1 L1755.8 815.8 L1756.0 884.1 L1756.2 856.3 L1756.3 774.9 L1756.5 835.6 L1756.7 816.4 L1756.8 812.1 L1757.0 933.8 L1757.2 882.2 L1757.3 900.4 L1757.5 921.5 L1757.7 899.7 L1757.8 976.0 L1758.0 806.7 L1758.2 819.6 L1758.3 884.5 L1758.5 860.8 L1758.7 845.5 L1758.8 893.2 L1759.0 814.4 L1759.2 844.8 L1759.3 875.7 L1759.5 920.2 L1759.7 856.6 L1759.8 860.7 L1760.0 834.5 L1760.2 866.2 L1760.3 813.4 L1760.5 871.9 L1760.7 924.5 L1760.8 859.8 L1761.0 934.2 L1761.2 976.0 L1761.3 938.5 L1761.5 847.8 L1761.7 874.1 L1761.8 833.8 L1762.0 866.3 L1762.2 766.8 L1762.3 858.3 L1762.5 915.5 L1762.7 868.0 L1762.8 856.8 L1763.0 866.2 L1763.2 809.0 L1763.3 805.8 L1763.5 886.6 L1763.7 866.3 L1763.8 783.3 L1764.0 802.6 L1764.2 894.9 L1764.3 819.1 L1764.5 849.1 L1764.7 811.7 L1764.8 845.1 L1765.0 843.5 L1765.2 821.2 L1765.3 830.6 L1765.5 806.6 L1765.7 839.6 L1765.9 976.0 L1766.0 958.9 L1766.2 774.9 L1766.4 927.1 L1766.5 970.8 L1766.7 887.1 L1766.9 797.1 L1767.0 889.0 L1767.2 822.8 L1767.4 848.3 L1767.5 902.5 L1767.7 839.9 L1767.9 919.2 L1768.1 877.1 L1768.2 891.2 L1768.4 865.4 L1768.6 794.0 L1768.7 902.0 L1768.9 837.8 L1769.1 853.5 L1769.2 838.1 L1769.4 898.8 L1769.6 976.0 L1769.7 892.2 L1769.9 812.9 L1770.1 875.3 L1770.3 922.3 L1770.4 815.4 L1770.6 851.4 L1770.8 976.0 L1770.9 845.9 L1771.1 849.2 L1771.3 959.3 L1771.5 847.7 L1771.6 863.8 L1771.8 887.0 L1772.0 860.6 L1772.1 946.8 L1772.3 798.3 L1772.5 905.2 L1772.6 937.9 L1772.8 778.9 L1773.0 786.8 L1773.2 787.4 L1773.3 837.5 L1773.5 833.2 L1773.7 936.2 L1773.8 813.3 L1774.0 836.0 L1774.2 776.9 L1774.4 862.3 L1774.5 833.9 L1774.7 860.5 L1774.9 911.0 L1775.1 789.2 L1775.2 822.7 L1775.4 841.0 L1775.6 976.0 L1775.7 891.2 L1775.9 813.8 L1776.1 871.5 L1776.3 870.4 L1776.4 823.9 L1776.6 855.1 L1776.8 898.1 L1776.9 852.4 L1777.1 841.1 L1777.3 921.0 L1777.5 853.7 L1777.6 883.9 L1777.8 813.9 L1778.0 865.4 L1778.2 881.7 L1778.3 844.3 L1778.5 845.3 L1778.7 855.6 L1778.9 891.0 L1779.0 812.0 L1779.2 890.9 L1779.4 861.4 L1779.5 825.9 L1779.7 858.0 L1779.9 834.1 L1780.1 844.8 L1780.2 961.8 L1780.4 955.4 L1780.6 869.0 L1780.8 849.1 L1780.9 863.9 L1781.1 829.2 L1781.3 857.6 L1781.5 859.8 L1781.6 878.7 L1781.8 889.3 L1782.0 811.7 L1782.2 838.9 L1782.3 922.7 L1782.5 864.5 L1782.7 863.8 L1782.9 976.0 L1783.0 885.2 L1783.2 942.0 L1783.4 931.9 L1783.6 831.6 L1783.7 948.1 L1783.9 822.9 L1784.1 888.0 L1784.3 897.7 L1784.4 861.2 L1784.6 871.7 L1784.8 807.3 L1785.0 919.9 L1785.1 976.0 L1785.3 879.9 L1785.5 842.2 L1785.7 807.4 L1785.8 890.6 L1786.0 896.7 L1786.2 899.8 L1786.4 819.2 L1786.6 822.6 L1786.7 824.0 L1786.9 866.9 L1787.1 831.3 L1787.3 894.6 L1787.4 893.3 L1787.6 843.6 L1787.8 816.2 L1788.0 875.4 L1788.1 976.0 L1788.3 917.4 L1788.5 898.0 L1788.7 851.2 L1788.9 782.4 L1789.0 819.0 L1789.2 918.0 L1789.4 835.0 L1789.6 864.8 L1789.7 824.9 L1789.9 829.0 L1790.1 799.4 L1790.3 808.5 L1790.5 782.6 L1790.6 806.4 L1790.8 845.1 L1791.0 772.7 L1791.2 914.3 L1791.3 858.8 L1791.5 833.1 L1791.7 937.7 L1791.9 785.3 L1792.1 790.0 L1792.2 865.5 L1792.4 815.0 L1792.6 911.1 L1792.8 810.3 L1793.0 789.4 L1793.1 816.3 L1793.3 805.7 L1793.5 794.3 L1793.7 840.9 L1793.8 976.0 L1794.0 830.6 L1794.2 946.1 L1794.4 860.2 L1794.6 827.4 L1794.7 800.0 L1794.9 813.7 L1795.1 834.5 L1795.3 863.2 L1795.5 897.6 L1795.7 879.9 L1795.8 871.8 L1796.0 836.9 L1796.2 866.4 L1796.4 851.8 L1796.6 858.0 L1796.7 763.3 L1796.9 818.2 L1797.1 865.9 L1797.3 795.5 L1797.5 867.0 L1797.6 789.3 L1797.8 850.4 L1798.0 848.6 L1798.2 916.6 L1798.4 856.2 L1798.5 880.0 L1798.7 947.7 L1798.9 877.1 L1799.1 845.7 L1799.3 819.9 L1799.4 890.4 L1799.6 828.1 L1799.8 905.0 L1800.0 866.8 L1800.2 935.5 L1800.4 869.8 L1800.5 800.0 L1800.7 849.6 L1800.9 921.1 L1801.1 778.5 L1801.3 862.5 L1801.5 800.1 L1801.6 828.2 L1801.8 835.1 L1802.0 902.4 L1802.2 785.8 L1802.4 972.5 L1802.6 909.4 L1802.7 814.8 L1802.9 893.2 L1803.1 780.2 L1803.3 939.6 L1803.5 847.3 L1803.7 826.8 L1803.8 888.7 L1804.0 857.7 L1804.2 843.1 L1804.4 976.0 L1804.6 823.6 L1804.8 844.0 L1804.9 812.5 L1805.1 844.0 L1805.3 967.5 L1805.5 779.0 L1805.7 873.1 L1805.9 787.8 L1806.1 956.2 L1806.2 830.3 L1806.4 799.6 L1806.6 855.1 L1806.8 801.7 L1807.0 803.1 L1807.2 864.2 L1807.4 797.9 L1807.5 976.0 L1807.7 933.5 L1807.9 852.9 L1808.1 901.1 L1808.3 828.9 L1808.5 786.5 L1808.7 872.5 L1808.8 871.9 L1809.0 845.8 L1809.2 824.6 L1809.4 870.1 L1809.6 941.6 L1809.8 821.5 L1810.0 848.2 L1810.1 793.8 L1810.3 920.8 L1810.5 976.0 L1810.7 862.0 L1810.9 806.4 L1811.1 820.8 L1811.3 976.0 L1811.4 793.0 L1811.6 843.9 L1811.8 776.2 L1812.0 860.9 L1812.2 976.0 L1812.4 903.5 L1812.6 970.2 L1812.8 779.4 L1812.9 834.7 L1813.1 838.7 L1813.3 824.3 L1813.5 814.3 L1813.7 976.0 L1813.9 795.6 L1814.1 860.3 L1814.3 777.1 L1814.5 877.4 L1814.6 852.1 L1814.8 841.9 L1815.0 880.1 L1815.2 807.6 L1815.4 813.2 L1815.6 809.1 L1815.8 878.0 L1816.0 897.4 L1816.1 847.8 L1816.3 840.4 L1816.5 849.1 L1816.5 886.2 L1816.5 957.2 L1816.5 976.0 L1816.5 736.9 L1816.5 553.7 L1816.6 492.6 L1816.6 553.7 L1816.6 736.9 L1816.6 936.1 L1816.6 848.3 L1816.6 817.7 L1816.6 818.3 L1816.7 924.0 L1816.9 809.6 L1817.1 885.2 L1817.3 809.9 L1817.5 853.1 L1817.7 832.3 L1817.9 866.9 L1818.1 806.4 L1818.2 762.5 L1818.4 870.1 L1818.6 817.1 L1818.8 930.5 L1819.0 828.9 L1819.2 821.3 L1819.4 798.5 L1819.6 809.8 L1819.8 838.0 L1820.0 900.6 L1820.1 976.0 L1820.3 845.5 L1820.5 865.7 L1820.7 814.7 L1820.9 903.6 L1821.1 818.8 L1821.3 777.6 L1821.5 776.8 L1821.7 889.4 L1821.9 969.9 L1822.1 871.5 L1822.3 791.8 L1822.4 872.8 L1822.6 831.2 L1822.8 831.7 L1823.0 872.4 L1823.2 869.6 L1823.4 839.1 L1823.6 818.8 L1823.8 860.5 L1824.0 807.6 L1824.2 894.8 L1824.4 839.9 L1824.6 813.5 L1824.8 792.6 L1824.9 829.9 L1825.1 778.4 L1825.3 877.3 L1825.5 904.5 L1825.7 933.2 L1825.9 855.2 L1826.1 768.1 L1826.3 898.3 L1826.5 825.7 L1826.7 833.6 L1826.9 817.9 L1827.1 873.5 L1827.3 848.5 L1827.5 813.3 L1827.7 868.4 L1827.9 851.4 L1828.1 836.4 L1828.3 933.4 L1828.5 820.4 L1828.6 855.9 L1828.8 863.8 L1829.0 870.1 L1829.2 830.8 L1829.4 878.4 L1829.6 910.5 L1829.8 934.7 L1830.0 816.5 L1830.2 872.5 L1830.4 902.1 L1830.6 900.0 L1830.8 807.5 L1831.0 848.4 L1831.2 815.8 L1831.4 765.7 L1831.6 976.0 L1831.8 829.3 L1832.0 880.0 L1832.2 903.1 L1832.4 810.3 L1832.6 810.9 L1832.8 902.9 L1833.0 961.8 L1833.2 827.1 L1833.4 827.3 L1833.6 976.0 L1833.7 812.9 L1833.9 872.6 L1834.2 874.9 L1834.4 976.0 L1834.5 888.4 L1834.7 976.0 L1834.9 919.7 L1835.1 822.1 L1835.3 908.4 L1835.5 848.6 L1835.7 830.0 L1835.9 815.2 L1836.1 900.5 L1836.3 976.0 L1836.5 865.7 L1836.7 942.1 L1836.8 976.0" fill="none" stroke="#000" stroke-width="2.2" stroke-linejoin="round"/>
<path d="" fill="none" stroke="#000" stroke-width="2" shape-rendering="crispEdges"/>
<path d="M1675.5 756V956M1817.5 924V971" stroke="#c8c8c8" stroke-width="0.9"/>
<path d="M1210.6 86V971" stroke="#000" stroke-width="1.3"/>
<path d="M57 230.5H1899" stroke="#000" stroke-width="1.2"/>
</g>
</svg>
<div class="yl" style="top:100.4px">35</div>
<div class="yl" style="top:141.1px">30</div>
<div class="yl" style="top:181.8px">25</div>
<div class="yl" style="top:263.3px">15</div>
<div class="yl" style="top:304.0px">10</div>
<div class="yl" style="top:344.7px">5</div>
<div class="yl" style="top:385.4px">0</div>
<div class="yl" style="top:426.1px">-5</div>
<div class="yl" style="top:466.8px">-10</div>
<div class="yl" style="top:507.5px">-15</div>
<div class="yl" style="top:548.3px">-20</div>
<div class="yl" style="top:589.0px">-25</div>
<div class="yl" style="top:629.7px">-30</div>
<div class="yl" style="top:670.4px">-35</div>
<div class="yl" style="top:711.1px">-40</div>
<div class="yl" style="top:751.8px">-45</div>
<div class="yl" style="top:792.5px">-50</div>
<div class="yl" style="top:833.3px">-55</div>
<div class="yl" style="top:874.0px">-60</div>
<div class="yl" style="top:914.7px">-65</div>
<div class="yl" style="top:955.4px">-70</div>
<div class="a" style="left:30px;top:223px;width:26px;height:15px;border:1px solid #1c1ca8;color:#1c1ca8;font-size:10.5px;line-height:13px;text-align:center;background:#f4f4f4">19,6</div>
<div class="xl" style="left:57.3px">3</div>
<div class="xl" style="left:94.1px">4</div>
<div class="xl" style="left:139.2px">5</div>
<div class="xl" style="left:176.1px">6</div>
<div class="xl" style="left:207.3px">7</div>
<div class="xl" style="left:234.3px">8</div>
<div class="xl" style="left:258.1px">9</div>
<div class="xl" style="left:279.4px">10</div>
<div class="xl" style="left:419.7px">20</div>
<div class="xl" style="left:501.7px">30</div>
<div class="xl" style="left:559.9px">40</div>
<div class="xl" style="left:605.0px">50</div>
<div class="xl" style="left:641.9px">60</div>
<div class="xl" style="left:673.1px">70</div>
<div class="xl" style="left:700.1px">80</div>
<div class="xl" style="left:723.9px">90</div>
<div class="xl" style="left:745.2px">100</div>
<div class="xl" style="left:885.5px">200</div>
<div class="xl" style="left:967.5px">300</div>
<div class="xl" style="left:1025.7px">400</div>
<div class="xl" style="left:1070.8px">500</div>
<div class="xl" style="left:1107.7px">600</div>
<div class="xl" style="left:1138.9px">700</div>
<div class="xl" style="left:1165.9px">800</div>
<div class="xl" style="left:1189.7px">900</div>
<div class="xl" style="left:1351.3px">2k</div>
<div class="xl" style="left:1433.3px">3k</div>
<div class="xl" style="left:1491.5px">4k</div>
<div class="xl" style="left:1536.6px">5k</div>
<div class="xl" style="left:1573.5px">6k</div>
<div class="xl" style="left:1604.7px">7k</div>
<div class="xl" style="left:1631.7px">8k</div>
<div class="xl" style="left:1655.5px">9k</div>
<div class="xl" style="left:1676.8px">10k</div>
<div class="xl g" style="left:1729.9px">13k</div>
<div class="xl g" style="left:1758.9px">15k</div>
<div class="xl g" style="left:1784.2px">17k</div>
<div class="xl" style="left:1817.1px">20k</div>
<div class="xl g" style="left:1862.2px">25k</div>
<div class="a" style="left:1884px;top:977px;font-size:10.5px;line-height:12px;color:#111">30kHz</div>
<div class="a" style="left:1198px;top:975px;width:23px;height:15px;border:1px solid #1c1ca8;color:#1c1ca8;font-size:10.5px;line-height:13px;text-align:center;background:#fff">995</div>
<svg class="a" style="left:62px;top:89px" width="16" height="38" viewBox="0 0 16 38">
<circle cx="8" cy="8" r="6" fill="#fff" stroke="#333" stroke-width="2"/><path d="M4.5 8H11.5M8 4.5V11.5" stroke="#333" stroke-width="2.6"/>
<circle cx="8" cy="30" r="6" fill="#fff" stroke="#333" stroke-width="2"/><path d="M4.5 30H11.5" stroke="#333" stroke-width="2.6"/>
</svg>
<div class="a" style="left:59px;top:133px;width:62px;height:21px;border:1px solid #7d7d7d;background:#fff;font-size:10.5px;line-height:19px;padding-left:7px">SPL</div>
<div class="a" style="left:104px;top:134px;width:16px;height:19px;border-left:1px solid #999;background:linear-gradient(to bottom,#f2f2f2,#cfcfcf)"></div>
<svg class="a" style="left:107px;top:141px" width="10" height="6"><path d="M0 0H10L5 6Z" fill="#333"/></svg>
<div class="ib" style="left:123px;top:87px;width:248px;height:106px"></div>
<div class="row" style="left:124px;width:248px;text-align:center;top:97px;font-size:10.7px"><b>9 974,38 Hz, -61,02 dBFS, 16,62 dB</b></div>
<div class="row" style="left:124px;width:248px;text-align:center;top:116px;font-size:10.7px">Span: <b>0 .. 20 947 Hz</b></div>
<div class="row" style="left:90px;width:73px;text-align:right;top:135px;font-size:10.7px">N+D:</div>
<div class="row" style="left:167px;top:135px;font-size:10.7px"><b>-13,8 dB A</b></div>
<div class="row" style="left:90px;width:73px;text-align:right;top:154px;font-size:10.7px">N:</div>
<div class="row" style="left:167px;top:154px;font-size:10.7px"><b>-4,4 dB</b></div>
<div class="row" style="left:90px;width:73px;text-align:right;top:173px;font-size:10.7px">2nd:</div>
<div class="row" style="left:167px;top:173px;font-size:10.7px"><b>1,95 %</b></div>
<div class="row" style="left:240px;width:70px;text-align:right;top:135px;font-size:10.7px">THD:</div>
<div class="row" style="left:314px;top:135px;font-size:10.7px"><b>1,95 %</b></div>
<div class="row" style="left:240px;width:70px;text-align:right;top:154px;font-size:10.7px">THD+N:</div>
<div class="row" style="left:314px;top:154px;font-size:10.7px"><b>9,12 %</b></div>
<div class="a" style="left:564px;top:122.5px;font-size:32px;line-height:36px;font-weight:bold;white-space:nowrap">Скрин 10 кГц</div>
<div class="ib" style="left:1665px;top:87px;width:139px;height:69px"></div>
<div class="row" style="left:1665px;width:139px;text-align:center;top:96px;font-size:16.3px;line-height:18px"><b>16,66 dB</b></div>
<div class="row" style="left:1665px;width:139px;text-align:center;top:117px;font-size:9.3px;line-height:11px"><b>12,3 dB C, 14,2 dB A</b></div>
<div class="row" style="left:1665px;width:139px;text-align:center;top:129px;font-size:9.3px;line-height:11px"><b>Peak sample: -59,43 dBFS</b></div>
<div class="row" style="left:1665px;width:139px;text-align:center;top:141px;font-size:9.3px;line-height:11px"><b>16,7 dB 22 - 22k UNW</b></div>
<div class="a" style="left:1849px;top:87px;width:48px;height:44px;border:1px solid #5f6e70;border-radius:4px;background:linear-gradient(to bottom,#cdd6d8,#c2cdcf 75%,#a9b6b8);box-shadow:inset 1px 1px 2px #eef"></div>
<svg class="a" style="left:1864px;top:100px" width="18" height="18"><defs><radialGradient id="rd" cx=".45" cy=".4"><stop offset="0" stop-color="#ffb090"/><stop offset=".5" stop-color="#f24a1e"/><stop offset="1" stop-color="#b3220a"/></radialGradient></defs><circle cx="9" cy="9" r="6.8" fill="url(#rd)"/></svg>
<div class="a" style="left:1672px;top:292px;width:9px;height:12px;background:#fff;font-size:10.5px;line-height:12px;text-align:center">1</div>
<div class="a" style="left:1811px;top:581px;width:10px;height:12px;background:#fff;font-size:10.5px;line-height:12px;text-align:center">2</div>
<div class="a" style="left:60px;top:931px;width:181px;height:33px;border:3px solid #8f8f8f;border-radius:10px;background:rgba(255,255,255,.9)"></div>
<div class="a" style="left:70px;top:939px;font-size:16.4px;line-height:19px;font-weight:bold;white-space:nowrap">2 coherent averages</div>
<div class="a" style="left:1805px;top:905px;width:92px;height:19px;border:1px solid #8a8a8a;border-radius:5px;background:linear-gradient(to bottom,#fcfcfc,#e4e4e4 70%,#cfcfcf);font-size:10.5px;line-height:17px;text-align:center">10 .. 200</div>
<div class="a" style="left:1805px;top:927px;width:92px;height:19px;border:1px solid #8a8a8a;border-radius:5px;background:linear-gradient(to bottom,#fcfcfc,#e4e4e4 70%,#cfcfcf);font-size:10.5px;line-height:17px;text-align:center">20 .. 20 000</div>
<svg class="a" style="left:1853px;top:950px" width="40" height="17" viewBox="0 0 40 17">
<circle cx="8.7" cy="8.3" r="6" fill="#fff" stroke="#333" stroke-width="2"/><path d="M5.2 8.3H12.2" stroke="#333" stroke-width="2.6"/>
<circle cx="32.3" cy="8.3" r="6" fill="#fff" stroke="#333" stroke-width="2"/><path d="M28.8 8.3H35.8M32.3 4.8V11.8" stroke="#333" stroke-width="2.6"/>
</svg>
<!-- title bar -->
<div class="title">MICROPHONE (Общая громкость) R on Микрофон (E-MU 0202 | USB) at 44.1 kHz, 32 768-point Spectrum, Dolph-Chebyshev 200 window, 75% overlap, 2 coherent averages</div>
<svg class="a" style="left:2px;top:3px" width="17" height="17" viewBox="0 0 17 17">
<rect x="0.5" y="0.5" width="15.5" height="15.5" fill="#eef2f4" stroke="#3e6e55" stroke-width=".8"/>
<path d="M9.5 3.5 L13 8.5 L10 11.5 L7.5 8.5Z" fill="#2a0a0a"/><circle cx="10.5" cy="8.2" r="2" fill="#e0506a"/>
<path d="M2 11 Q3 9 6 10 L5 12Z M13.5 11 L15.5 12 L14.5 13Z" fill="#2b3340"/>
<path d="M3 15 Q9 12.5 14 15.5" fill="none" stroke="#4a4a55" stroke-width="1.4"/>
</svg>
<div class="a" style="left:1828px;top:11px;width:8px;height:2px;background:#0b2a16"></div>
<div class="a" style="left:1853px;top:6px;width:8px;height:8px;border:2px solid #0b2a16"></div>
<div class="a" style="left:1856px;top:4px;width:8px;height:8px;border-top:2px solid #0b2a16;border-right:2px solid #0b2a16"></div>
<div class="a" style="left:1872px;top:0;width:45px;height:19px;background:#c94c4e"></div>
<svg class="a" style="left:1889px;top:5px" width="12" height="10" viewBox="0 0 12 10"><path d="M1.5 1 L10.5 9 M10.5 1 L1.5 9" stroke="#fff" stroke-width="2"/></svg>

<!-- camera -->
<svg class="a" style="left:23px;top:35px" width="32" height="24" viewBox="0 0 32 24">
<defs><linearGradient id="cg" x1="0" y1="0" x2="1" y2="1"><stop offset="0" stop-color="#fbfbfb"/><stop offset="1" stop-color="#c9c9c9"/></linearGradient>
<radialGradient id="lg"><stop offset="0" stop-color="#333"/><stop offset=".35" stop-color="#777"/><stop offset=".7" stop-color="#bbb"/><stop offset="1" stop-color="#888"/></radialGradient></defs>
<rect x="5" y="1" width="6" height="3" fill="#ccc"/>
<rect x="1.5" y="3.5" width="29.5" height="18" fill="url(#cg)" stroke="#7a7a7a"/>
<circle cx="20.5" cy="12.5" r="7.3" fill="url(#lg)"/>
</svg>
<div class="a" style="left:32px;top:69px;font-size:10.5px;line-height:12px">SPL</div>

<!-- toolbar buttons -->
<div class="btn pr" style="left:560px;width:56px;padding-top:6px">Show<br>distortion</div>
<div class="btn" style="left:636px;width:60px;padding-top:6px">Reset<br>averaging</div>
<div class="btn" style="left:716px;width:38px;padding-top:24px;color:#c4c4c4">WAV</div>
<svg class="a" style="left:727px;top:30px" width="16" height="14" viewBox="0 0 16 14"><path d="M0 2 L0 13 L16 13 L16 4 L8 4 L6 1 L1 1Z" fill="#a9a9a9"/></svg>
<div class="btn" style="left:764px;width:48px;padding-top:24px">Current</div>
<div class="btn" style="left:822px;width:48px;padding-top:24px">Peak</div>
<div class="btn" style="left:880px;width:48px;padding-top:24px">Both</div>
<svg class="a" style="left:781px;top:30px" width="14" height="14" viewBox="0 0 14 14"><path d="M0 0H14V14H0Z" fill="#2e2e2e"/><rect x="2" y="0" width="10" height="7" fill="#e4eaee"/><rect x="3" y="9" width="7" height="5" fill="#d4d4d4"/><rect x="4" y="10" width="2" height="3" fill="#111"/></svg>
<svg class="a" style="left:839px;top:30px" width="14" height="14" viewBox="0 0 14 14"><path d="M0 0H14V14H0Z" fill="#2e2e2e"/><rect x="2" y="0" width="10" height="7" fill="#e4eaee"/><rect x="3" y="9" width="7" height="5" fill="#d4d4d4"/><rect x="4" y="10" width="2" height="3" fill="#111"/></svg>
<svg class="a" style="left:897px;top:30px" width="14" height="14" viewBox="0 0 14 14"><path d="M0 0H14V14H0Z" fill="#2e2e2e"/><rect x="2" y="0" width="10" height="7" fill="#e4eaee"/><rect x="3" y="9" width="7" height="5" fill="#d4d4d4"/><rect x="4" y="10" width="2" height="3" fill="#111"/></svg>
<div class="btn" style="left:948px;width:44px"></div>
<svg class="a" style="left:953px;top:30px" width="32" height="33" viewBox="0 0 32 33">
<path d="M5.5 3 V1.5 H29.5 V31.5 H5.5 V27" fill="none" stroke="#000" stroke-width="3"/>
<path d="M5.5 7 V14 M5.5 20 V23" stroke="#000" stroke-width="3"/>
<path d="M1 10 H12 M8 6.5 L11.5 10 L8 13.5 M1 22.5 H12 M8 19 L11.5 22.5 L8 26" fill="none" stroke="#000" stroke-width="2.2"/>
</svg>
<div class="btn" style="left:1012px;width:52px;padding-top:6px">Stepped<br>sine</div>
<div class="btn" style="left:1084px;width:54px;padding-top:6px">Calibrate<br>level</div>
<div class="a" style="left:1150px;top:26.5px;font-size:10.5px;line-height:12px">FS sine Vrms</div>
<div class="a" style="left:1148px;top:47px;width:70px;height:21px;background:#fff;border:1px solid #9c9c9c;font-size:10.5px;line-height:20px;padding-left:12px">1,0000 V</div>
<svg class="a" style="left:1150px;top:49px" width="8" height="8"><path d="M0 0H7L0 7Z" fill="#333"/></svg>

<!-- right toolbar icons -->
<svg class="a" style="left:1742px;top:32px" width="40" height="28" viewBox="0 0 40 28">
<rect x="9.5" y="2.5" width="28" height="16" fill="#bdbdbd" stroke="#777"/>
<path d="M4.5 0.5 L7.5 4 H1.5Z M4.5 17 L7.5 13.5 H1.5Z" fill="#111"/>
<rect x="2" y="6.5" width="5" height="4.5" fill="#444"/>
<path d="M11.5 20 L8 23 L11.5 26Z M34 20 L37.5 23 L34 26Z" fill="#111"/>
<rect x="17" y="21" width="10" height="4" fill="#444"/>
</svg>
<svg class="a" style="left:1792px;top:34px" width="37" height="24" viewBox="0 0 37 24">
<rect x="0.5" y="0.5" width="35" height="23" fill="#fff" stroke="#c6c6c6"/>
<path d="M13.5 1V23 M21.5 1V23 M27.5 1V23 M31.5 1V23" stroke="#c6c6c6"/>
</svg>
<svg class="a" style="left:1840px;top:34px" width="37" height="24" viewBox="0 0 37 24">
<rect x="0.5" y="0.5" width="35" height="23" fill="#fff" stroke="#c6c6c6"/>
<path d="M18 3V10 M18 14V21 M3 12H10 M26 12H33" stroke="#000" stroke-width="2"/>
<path d="M14.5 6.5 L18 2.5 L21.5 6.5 M14.5 17.5 L18 21.5 L21.5 17.5 M6.5 8.5 L2.5 12 L6.5 15.5 M29.5 8.5 L33.5 12 L29.5 15.5" fill="none" stroke="#000" stroke-width="2"/>
</svg>
<svg class="a" style="left:1888px;top:34px" width="24" height="24" viewBox="0 0 24 24">
<defs><radialGradient id="gg" cx=".45" cy=".4" r=".6"><stop offset="0" stop-color="#f2f2f2"/><stop offset=".6" stop-color="#b9b9b9"/><stop offset="1" stop-color="#8c8c8c"/></radialGradient></defs>
<path d="M20.40 12.00 L22.58 12.67 L22.39 14.10 L20.11 14.17 L19.76 15.21 L19.27 16.20 L20.83 17.87 L19.95 19.01 L17.94 17.94 L17.11 18.66 L16.20 19.27 L16.71 21.49 L15.38 22.05 L14.17 20.11 L13.10 20.33 L12.00 20.40 L11.33 22.58 L9.90 22.39 L9.83 20.11 L8.79 19.76 L7.80 19.27 L6.13 20.83 L4.99 19.95 L6.06 17.94 L5.34 17.11 L4.73 16.20 L2.51 16.71 L1.95 15.38 L3.89 14.17 L3.67 13.10 L3.60 12.00 L1.42 11.33 L1.61 9.90 L3.89 9.83 L4.24 8.79 L4.73 7.80 L3.17 6.13 L4.05 4.99 L6.06 6.06 L6.89 5.34 L7.80 4.73 L7.29 2.51 L8.62 1.95 L9.83 3.89 L10.90 3.67 L12.00 3.60 L12.67 1.42 L14.10 1.61 L14.17 3.89 L15.21 4.24 L16.20 4.73 L17.87 3.17 L19.01 4.05 L17.94 6.06 L18.66 6.89 L19.27 7.80 L21.49 7.29 L22.05 8.62 L20.11 9.83 L20.33 10.90Z" fill="url(#gg)" stroke="#6f6f6f" stroke-width=".9"/>
<circle cx="12" cy="12" r="5.6" fill="none" stroke="#d8d8d8" stroke-width="1"/>
<circle cx="12" cy="12" r="3" fill="#fafafa" stroke="#666" stroke-width="1"/>
</svg>

<!-- vertical scrollbar -->
<div class="a" style="left:2px;top:85px;width:16px;height:886px;background:#fff;border:1px solid #8c8c8c"></div>
<div class="a" style="left:3px;top:86px;width:14px;height:14px;background:linear-gradient(to right,#f4f4f4,#cfcfcf);border-bottom:1px solid #9a9a9a"></div>
<svg class="a" style="left:6px;top:90px" width="8" height="5"><path d="M0 5L4 0L8 5Z" fill="#333"/></svg>
<div class="a" style="left:3px;top:389px;width:14px;height:224px;background:linear-gradient(to right,#f6f6f6,#d5d5d5);border-top:1px solid #8c8c8c;border-bottom:1px solid #8c8c8c"></div>
<div class="a" style="left:3px;top:956px;width:14px;height:14px;background:linear-gradient(to right,#f4f4f4,#cfcfcf);border-top:1px solid #9a9a9a"></div>
<svg class="a" style="left:6px;top:961px" width="8" height="5"><path d="M0 0L4 5L8 0Z" fill="#333"/></svg>

<!-- horizontal scrollbar -->
<div class="a" style="left:57px;top:995px;width:1842px;height:16px;background:#fff;border:1px solid #8c8c8c"></div>
<div class="a" style="left:58px;top:996px;width:14px;height:14px;background:linear-gradient(to bottom,#f6f6f6,#d0d0d0);border-right:1px solid #9a9a9a"></div>
<svg class="a" style="left:62px;top:999px" width="5" height="8"><path d="M5 0L0 4L5 8Z" fill="#333"/></svg>
<div class="a" style="left:891px;top:996px;width:993px;height:14px;background:linear-gradient(to bottom,#f8f8f8,#d2d2d2);border-left:1px solid #8c8c8c"></div>
<div class="a" style="left:1884px;top:996px;width:14px;height:14px;background:linear-gradient(to bottom,#f6f6f6,#d0d0d0);border-left:1px solid #9a9a9a"></div>
<svg class="a" style="left:1889px;top:999px" width="5" height="8"><path d="M0 0L5 4L0 8Z" fill="#333"/></svg>

<!-- legend bar -->
<div class="a" style="left:450px;top:1013px;width:1055px;height:23px;background:#fff;box-shadow:inset 2px 2px 2px #8a8a8a, 1px 1px 2px #aaa"></div>
<div class="a" style="left:455px;top:1018px;width:13px;height:13px;border:1px solid #c8c8c8;border-radius:2px;background:#e4e4e4"></div>
<svg class="a" style="left:455px;top:1016px" width="14" height="14"><path d="M2.5 7.5 L6 11 L10.5 2" fill="none" stroke="#bdbdbd" stroke-width="1.6"/></svg>
<div class="row" style="left:475px;top:1019px;color:#a8a8a8">No measurement</div>
<div class="row" style="left:753px;top:1019px;color:#a8a8a8">dB</div>
<div class="a" style="left:803px;top:1017px;width:14px;height:14px;border:1px solid #555;border-radius:2px;background:linear-gradient(#fff,#ddd)"></div>
<svg class="a" style="left:803px;top:1016px" width="15" height="15"><path d="M2.5 7.5 L6.5 11.5 L11 2" fill="none" stroke="#111" stroke-width="2"/></svg>
<div class="row" style="left:823px;top:1019px">Spectrum</div>
<div class="a" style="left:988px;top:1023px;width:49px;height:2px;background:#000"></div>
<div class="row" style="left:1072px;top:1019px">-52,8 dB</div>
<div class="a" style="left:1151px;top:1017px;width:14px;height:14px;border:1px solid #777;border-radius:2px;background:linear-gradient(#fff,#ddd)"></div>
<div class="row" style="left:1171px;top:1019px;color:#9a1a1a">Peak</div>
<div class="row" style="left:1424px;top:1019px;color:#9a1a1a">22,6 dB</div>

<!-- bottom taskbar bit -->
<div class="a" style="left:0;top:1039px;width:11px;height:41px;background:#1f8a54"></div>
</body></html>
